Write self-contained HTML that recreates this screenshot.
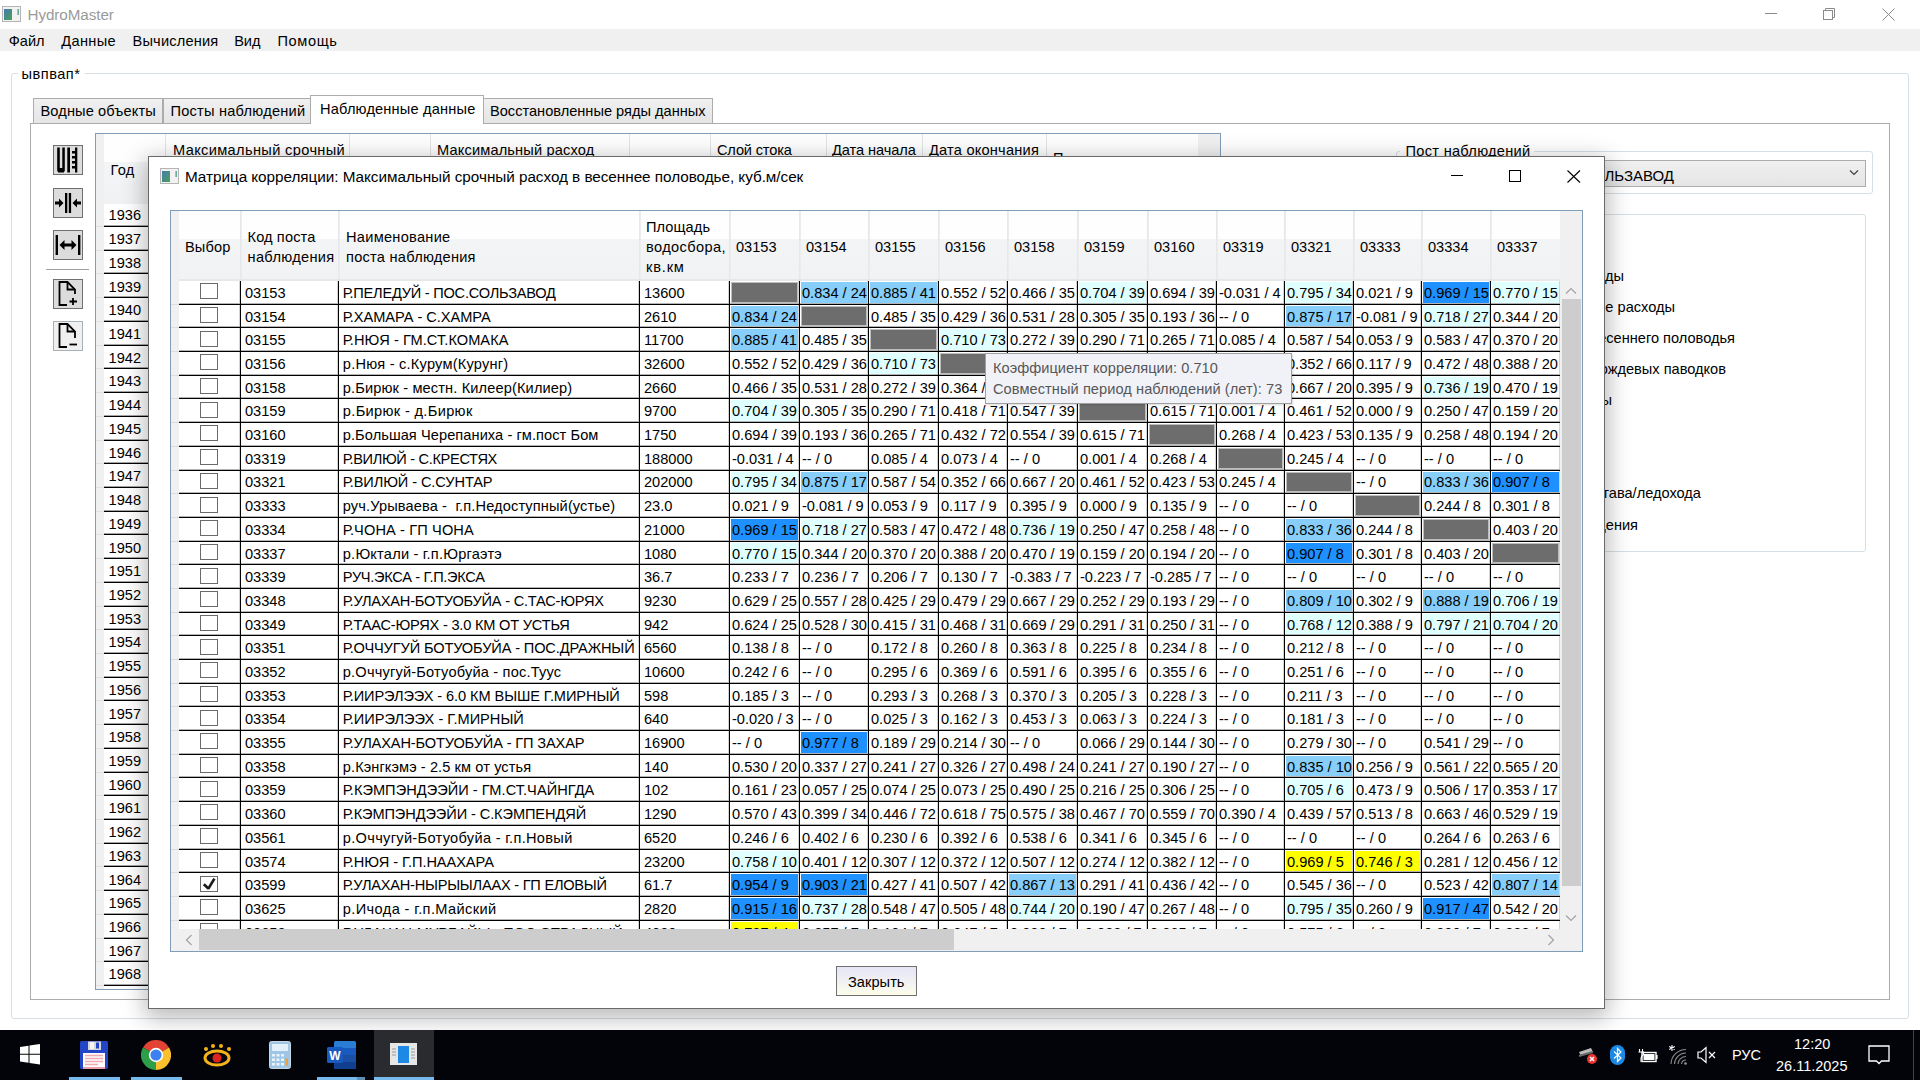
<!DOCTYPE html>
<html><head><meta charset="utf-8"><style>
html,body{margin:0;padding:0}
body{width:1920px;height:1080px;overflow:hidden;position:relative;background:#fff;font-family:"Liberation Sans",sans-serif}
.a{position:absolute}
.t{position:absolute;white-space:nowrap}
</style></head><body>
<svg class="a" style="left:2px;top:6px" width="19" height="16"><defs><linearGradient id="g2" x1="0" y1="0" x2="1" y2="1"><stop offset="0" stop-color="#4a78b0"/><stop offset="1" stop-color="#45a35a"/></linearGradient></defs><rect x="0.5" y="0.5" width="18" height="15" fill="#f2f2f2" stroke="#b4b4b4"/><rect x="2" y="3" width="8" height="11" fill="url(#g2)"/><rect x="15.5" y="3" width="1.3" height="6" fill="#4a9a8a"/></svg>
<div class="t " style="left:27.5px;top:5.23px;font-size:15.2px;line-height:19px;color:#9a9a9a;letter-spacing:-0.05px;">HydroMaster</div>
<div class="a" style="left:1765px;top:13px;width:12px;height:1px;background:#8a8a8a"></div>
<svg class="a" style="left:1822px;top:7px" width="16" height="16"><rect x="1.5" y="3.5" width="9" height="9" fill="none" stroke="#8a8a8a"/><path d="M3.5 3.5V1.5H12.5V10.5H10.5" fill="none" stroke="#8a8a8a"/></svg>
<svg class="a" style="left:1882px;top:8px" width="13" height="13"><path d="M0.5 0.5L12.5 12.5M12.5 0.5L0.5 12.5" stroke="#8a8a8a" stroke-width="1"/></svg>
<div class="a" style="left:0px;top:29px;width:1920px;height:22px;background:#f0f0f0"></div>
<div class="t " style="left:8.75px;top:31.94px;font-size:14.6px;line-height:18px;color:#000;letter-spacing:0.0px;">Файл</div>
<div class="t " style="left:61.25px;top:31.94px;font-size:14.6px;line-height:18px;color:#000;letter-spacing:0.35px;">Данные</div>
<div class="t " style="left:132.5px;top:31.94px;font-size:14.6px;line-height:18px;color:#000;letter-spacing:0.194px;">Вычисления</div>
<div class="t " style="left:234.25px;top:31.94px;font-size:14.6px;line-height:18px;color:#000;letter-spacing:-0.125px;">Вид</div>
<div class="t " style="left:277.5px;top:31.94px;font-size:14.6px;line-height:18px;color:#000;letter-spacing:0.6px;">Помощь</div>
<div class="a" style="left:11px;top:73px;width:1898px;height:946px;border:1px solid #d5dfe5;border-radius:3px;box-sizing:border-box"></div>
<div class="a" style="left:18px;top:64px;width:67px;height:16px;background:#fff"></div>
<div class="t " style="left:21.5px;top:64.94px;font-size:14.6px;line-height:18px;color:#000;letter-spacing:0.5px;">ывпвап*</div>
<div class="a" style="left:30px;top:123px;width:1860px;height:877px;border:1px solid #acacac;box-sizing:border-box;background:#fff"></div>
<div class="a" style="left:33px;top:98px;width:130px;height:25px;background:linear-gradient(#f0f0f0,#e5e5e5);border:1px solid #acacac;border-bottom:none;box-sizing:border-box"></div>
<div class="t " style="left:40.5px;top:101.74px;font-size:14.6px;line-height:18px;color:#000;letter-spacing:0.115px;">Водные объекты</div>
<div class="a" style="left:163px;top:98px;width:148px;height:25px;background:linear-gradient(#f0f0f0,#e5e5e5);border:1px solid #acacac;border-bottom:none;box-sizing:border-box"></div>
<div class="t " style="left:170.5px;top:101.74px;font-size:14.6px;line-height:18px;color:#000;letter-spacing:0.227px;">Посты наблюдений</div>
<div class="a" style="left:483px;top:98px;width:230px;height:25px;background:linear-gradient(#f0f0f0,#e5e5e5);border:1px solid #acacac;border-bottom:none;box-sizing:border-box"></div>
<div class="t " style="left:490px;top:101.74px;font-size:14.6px;line-height:18px;color:#000;letter-spacing:0.0px;">Восстановленные ряды данных</div>
<div class="a" style="left:310px;top:95px;width:174px;height:29px;background:#fff;border:1px solid #acacac;border-bottom:none;box-sizing:border-box"></div>
<div class="t " style="left:320px;top:100.44px;font-size:14.6px;line-height:18px;color:#000;letter-spacing:0.176px;">Наблюденные данные</div>
<div class="a" style="left:53px;top:145px;width:30px;height:30px;background:#dcdcdc;border:1px solid #707070;box-sizing:border-box"></div>
<svg class="a" style="left:53px;top:145px" width="30" height="30"><path d="M4.2 2.5H6.8V23H9.3V2.5H11.8V25.5L10.8 27.5H5.2L4.2 25.5Z" fill="#000"/><rect x="14.3" y="2.5" width="2.7" height="25" fill="#000"/><rect x="22" y="2.5" width="2.3" height="25" fill="#000"/><path d="M19 6H22V8.5H19ZM19 11H22V13.5H19ZM19 16H22V18.5H19ZM19 21H22V23.5H19Z" fill="#000"/></svg>
<div class="a" style="left:53px;top:188px;width:30px;height:30px;background:#dcdcdc;border:1px solid #707070;box-sizing:border-box"></div>
<svg class="a" style="left:53px;top:188px" width="30" height="30"><rect x="12" y="5" width="2.3" height="20" fill="#000"/><rect x="15.8" y="5" width="2.3" height="20" fill="#000"/><path d="M2 13.5H6V10.5L10.5 15L6 19.5V16.5H2Z" fill="#000"/><path d="M28 13.5H24V10.5L19.5 15L24 19.5V16.5H28Z" fill="#000"/></svg>
<div class="a" style="left:53px;top:230px;width:30px;height:30px;background:#dcdcdc;border:1px solid #707070;box-sizing:border-box"></div>
<svg class="a" style="left:53px;top:230px" width="30" height="30"><rect x="2.6" y="5" width="2.4" height="20" fill="#000"/><rect x="25" y="5" width="2.4" height="20" fill="#000"/><path d="M6.5 15L11.5 10V13.6H18.5V10L23.5 15L18.5 20V16.4H11.5V20Z" fill="#000"/></svg>
<div class="a" style="left:46px;top:269px;width:43px;height:1px;background:#a0a0a0"></div>
<div class="a" style="left:53px;top:279px;width:30px;height:30px;background:#dcdcdc;border:1px solid #707070;box-sizing:border-box"></div>
<svg class="a" style="left:53px;top:279px" width="30" height="30"><path d="M14 26H6.5V3H14.5L22 10.5V15" fill="none" stroke="#000" stroke-width="1.8"/><path d="M14.5 3V10.5H22" fill="none" stroke="#000" stroke-width="1.8"/><path d="M20 19V26M16.5 22.5H24" stroke="#000" stroke-width="1.8"/></svg>
<div class="a" style="left:53px;top:321px;width:30px;height:30px;background:#f0f0f0;border:1px solid #a9b1b8;box-sizing:border-box"></div>
<svg class="a" style="left:53px;top:321px" width="30" height="30"><path d="M14 26H6.5V3H14.5L22 10.5V17" fill="none" stroke="#000" stroke-width="1.8"/><path d="M14.5 3V10.5H22" fill="none" stroke="#000" stroke-width="1.8"/><path d="M16.5 23.5H24" stroke="#000" stroke-width="1.8"/></svg>
<div class="a" style="left:95px;top:133px;width:1126px;height:857px;border:1px solid #7f9db9;box-sizing:border-box;background:#fff"></div>
<div class="a" style="left:96px;top:134px;width:8px;height:855px;background:#f0f0f0"></div>
<div class="a" style="left:104px;top:134px;width:1094px;height:70px;background:linear-gradient(#fefefe 0,#fefefe 40%,#f4f5f7 40%,#f0f1f3 100%)"></div>
<div class="a" style="left:165px;top:134px;width:1px;height:70px;background:#e2e3e5"></div>
<div class="a" style="left:349px;top:134px;width:1px;height:70px;background:#e2e3e5"></div>
<div class="a" style="left:430px;top:134px;width:1px;height:70px;background:#e2e3e5"></div>
<div class="a" style="left:629px;top:134px;width:1px;height:70px;background:#e2e3e5"></div>
<div class="a" style="left:710px;top:134px;width:1px;height:70px;background:#e2e3e5"></div>
<div class="a" style="left:826px;top:134px;width:1px;height:70px;background:#e2e3e5"></div>
<div class="a" style="left:922px;top:134px;width:1px;height:70px;background:#e2e3e5"></div>
<div class="a" style="left:1046px;top:134px;width:1px;height:70px;background:#e2e3e5"></div>
<div class="a" style="left:1198px;top:134px;width:22px;height:855px;background:#f0f0f0"></div>
<div class="t " style="left:110.5px;top:160.94px;font-size:14.6px;line-height:18px;color:#000;letter-spacing:0.25px;">Год</div>
<div class="t " style="left:173px;top:140.94px;font-size:14.6px;line-height:18px;color:#000;letter-spacing:0.358px;">Максимальный срочный</div>
<div class="t " style="left:437px;top:140.94px;font-size:14.6px;line-height:18px;color:#000;letter-spacing:0.153px;">Максимальный расход</div>
<div class="t " style="left:717px;top:140.94px;font-size:14.6px;line-height:18px;color:#000;letter-spacing:-0.167px;">Слой стока</div>
<div class="t " style="left:832px;top:140.94px;font-size:14.6px;line-height:18px;color:#000;letter-spacing:-0.075px;">Дата начала</div>
<div class="t " style="left:929px;top:140.94px;font-size:14.6px;line-height:18px;color:#000;letter-spacing:0.212px;">Дата окончания</div>
<div class="t " style="left:1053px;top:148.94px;font-size:14.6px;line-height:18px;color:#000;">П</div>
<div class="a" style="left:96px;top:204px;width:60px;height:785px;overflow:hidden">
<div class="a" style="left:8px;top:21px;width:50px;height:1px;background:#a4a4a4"></div>
<div class="a" style="left:8px;top:22px;width:50px;height:1px;background:#000"></div>
<div class="a" style="left:0px;top:22px;width:8px;height:1px;background:#e0e0e0"></div>
<div class="t " style="left:12.599999999999994px;top:2.44px;font-size:14.6px;line-height:18px;color:#000;">1936</div>
<div class="a" style="left:8px;top:45px;width:50px;height:1px;background:#a4a4a4"></div>
<div class="a" style="left:8px;top:46px;width:50px;height:1px;background:#000"></div>
<div class="a" style="left:0px;top:46px;width:8px;height:1px;background:#e0e0e0"></div>
<div class="t " style="left:12.599999999999994px;top:26.16px;font-size:14.6px;line-height:18px;color:#000;">1937</div>
<div class="a" style="left:8px;top:68px;width:50px;height:1px;background:#a4a4a4"></div>
<div class="a" style="left:8px;top:69px;width:50px;height:1px;background:#000"></div>
<div class="a" style="left:0px;top:69px;width:8px;height:1px;background:#e0e0e0"></div>
<div class="t " style="left:12.599999999999994px;top:49.88px;font-size:14.6px;line-height:18px;color:#000;">1938</div>
<div class="a" style="left:8px;top:92px;width:50px;height:1px;background:#a4a4a4"></div>
<div class="a" style="left:8px;top:93px;width:50px;height:1px;background:#000"></div>
<div class="a" style="left:0px;top:93px;width:8px;height:1px;background:#e0e0e0"></div>
<div class="t " style="left:12.599999999999994px;top:73.60px;font-size:14.6px;line-height:18px;color:#000;">1939</div>
<div class="a" style="left:8px;top:116px;width:50px;height:1px;background:#a4a4a4"></div>
<div class="a" style="left:8px;top:117px;width:50px;height:1px;background:#000"></div>
<div class="a" style="left:0px;top:117px;width:8px;height:1px;background:#e0e0e0"></div>
<div class="t " style="left:12.599999999999994px;top:97.32px;font-size:14.6px;line-height:18px;color:#000;">1940</div>
<div class="a" style="left:8px;top:140px;width:50px;height:1px;background:#a4a4a4"></div>
<div class="a" style="left:8px;top:141px;width:50px;height:1px;background:#000"></div>
<div class="a" style="left:0px;top:141px;width:8px;height:1px;background:#e0e0e0"></div>
<div class="t " style="left:12.599999999999994px;top:121.04px;font-size:14.6px;line-height:18px;color:#000;">1941</div>
<div class="a" style="left:8px;top:163px;width:50px;height:1px;background:#a4a4a4"></div>
<div class="a" style="left:8px;top:164px;width:50px;height:1px;background:#000"></div>
<div class="a" style="left:0px;top:164px;width:8px;height:1px;background:#e0e0e0"></div>
<div class="t " style="left:12.599999999999994px;top:144.76px;font-size:14.6px;line-height:18px;color:#000;">1942</div>
<div class="a" style="left:8px;top:187px;width:50px;height:1px;background:#a4a4a4"></div>
<div class="a" style="left:8px;top:188px;width:50px;height:1px;background:#000"></div>
<div class="a" style="left:0px;top:188px;width:8px;height:1px;background:#e0e0e0"></div>
<div class="t " style="left:12.599999999999994px;top:168.48px;font-size:14.6px;line-height:18px;color:#000;">1943</div>
<div class="a" style="left:8px;top:211px;width:50px;height:1px;background:#a4a4a4"></div>
<div class="a" style="left:8px;top:212px;width:50px;height:1px;background:#000"></div>
<div class="a" style="left:0px;top:212px;width:8px;height:1px;background:#e0e0e0"></div>
<div class="t " style="left:12.599999999999994px;top:192.20px;font-size:14.6px;line-height:18px;color:#000;">1944</div>
<div class="a" style="left:8px;top:235px;width:50px;height:1px;background:#a4a4a4"></div>
<div class="a" style="left:8px;top:236px;width:50px;height:1px;background:#000"></div>
<div class="a" style="left:0px;top:236px;width:8px;height:1px;background:#e0e0e0"></div>
<div class="t " style="left:12.599999999999994px;top:215.92px;font-size:14.6px;line-height:18px;color:#000;">1945</div>
<div class="a" style="left:8px;top:258px;width:50px;height:1px;background:#a4a4a4"></div>
<div class="a" style="left:8px;top:259px;width:50px;height:1px;background:#000"></div>
<div class="a" style="left:0px;top:259px;width:8px;height:1px;background:#e0e0e0"></div>
<div class="t " style="left:12.599999999999994px;top:239.64px;font-size:14.6px;line-height:18px;color:#000;">1946</div>
<div class="a" style="left:8px;top:282px;width:50px;height:1px;background:#a4a4a4"></div>
<div class="a" style="left:8px;top:283px;width:50px;height:1px;background:#000"></div>
<div class="a" style="left:0px;top:283px;width:8px;height:1px;background:#e0e0e0"></div>
<div class="t " style="left:12.599999999999994px;top:263.36px;font-size:14.6px;line-height:18px;color:#000;">1947</div>
<div class="a" style="left:8px;top:306px;width:50px;height:1px;background:#a4a4a4"></div>
<div class="a" style="left:8px;top:307px;width:50px;height:1px;background:#000"></div>
<div class="a" style="left:0px;top:307px;width:8px;height:1px;background:#e0e0e0"></div>
<div class="t " style="left:12.599999999999994px;top:287.08px;font-size:14.6px;line-height:18px;color:#000;">1948</div>
<div class="a" style="left:8px;top:329px;width:50px;height:1px;background:#a4a4a4"></div>
<div class="a" style="left:8px;top:330px;width:50px;height:1px;background:#000"></div>
<div class="a" style="left:0px;top:330px;width:8px;height:1px;background:#e0e0e0"></div>
<div class="t " style="left:12.599999999999994px;top:310.80px;font-size:14.6px;line-height:18px;color:#000;">1949</div>
<div class="a" style="left:8px;top:353px;width:50px;height:1px;background:#a4a4a4"></div>
<div class="a" style="left:8px;top:354px;width:50px;height:1px;background:#000"></div>
<div class="a" style="left:0px;top:354px;width:8px;height:1px;background:#e0e0e0"></div>
<div class="t " style="left:12.599999999999994px;top:334.52px;font-size:14.6px;line-height:18px;color:#000;">1950</div>
<div class="a" style="left:8px;top:377px;width:50px;height:1px;background:#a4a4a4"></div>
<div class="a" style="left:8px;top:378px;width:50px;height:1px;background:#000"></div>
<div class="a" style="left:0px;top:378px;width:8px;height:1px;background:#e0e0e0"></div>
<div class="t " style="left:12.599999999999994px;top:358.24px;font-size:14.6px;line-height:18px;color:#000;">1951</div>
<div class="a" style="left:8px;top:401px;width:50px;height:1px;background:#a4a4a4"></div>
<div class="a" style="left:8px;top:402px;width:50px;height:1px;background:#000"></div>
<div class="a" style="left:0px;top:402px;width:8px;height:1px;background:#e0e0e0"></div>
<div class="t " style="left:12.599999999999994px;top:381.96px;font-size:14.6px;line-height:18px;color:#000;">1952</div>
<div class="a" style="left:8px;top:424px;width:50px;height:1px;background:#a4a4a4"></div>
<div class="a" style="left:8px;top:425px;width:50px;height:1px;background:#000"></div>
<div class="a" style="left:0px;top:425px;width:8px;height:1px;background:#e0e0e0"></div>
<div class="t " style="left:12.599999999999994px;top:405.68px;font-size:14.6px;line-height:18px;color:#000;">1953</div>
<div class="a" style="left:8px;top:448px;width:50px;height:1px;background:#a4a4a4"></div>
<div class="a" style="left:8px;top:449px;width:50px;height:1px;background:#000"></div>
<div class="a" style="left:0px;top:449px;width:8px;height:1px;background:#e0e0e0"></div>
<div class="t " style="left:12.599999999999994px;top:429.40px;font-size:14.6px;line-height:18px;color:#000;">1954</div>
<div class="a" style="left:8px;top:472px;width:50px;height:1px;background:#a4a4a4"></div>
<div class="a" style="left:8px;top:473px;width:50px;height:1px;background:#000"></div>
<div class="a" style="left:0px;top:473px;width:8px;height:1px;background:#e0e0e0"></div>
<div class="t " style="left:12.599999999999994px;top:453.12px;font-size:14.6px;line-height:18px;color:#000;">1955</div>
<div class="a" style="left:8px;top:495px;width:50px;height:1px;background:#a4a4a4"></div>
<div class="a" style="left:8px;top:496px;width:50px;height:1px;background:#000"></div>
<div class="a" style="left:0px;top:496px;width:8px;height:1px;background:#e0e0e0"></div>
<div class="t " style="left:12.599999999999994px;top:476.84px;font-size:14.6px;line-height:18px;color:#000;">1956</div>
<div class="a" style="left:8px;top:519px;width:50px;height:1px;background:#a4a4a4"></div>
<div class="a" style="left:8px;top:520px;width:50px;height:1px;background:#000"></div>
<div class="a" style="left:0px;top:520px;width:8px;height:1px;background:#e0e0e0"></div>
<div class="t " style="left:12.599999999999994px;top:500.56px;font-size:14.6px;line-height:18px;color:#000;">1957</div>
<div class="a" style="left:8px;top:543px;width:50px;height:1px;background:#a4a4a4"></div>
<div class="a" style="left:8px;top:544px;width:50px;height:1px;background:#000"></div>
<div class="a" style="left:0px;top:544px;width:8px;height:1px;background:#e0e0e0"></div>
<div class="t " style="left:12.599999999999994px;top:524.28px;font-size:14.6px;line-height:18px;color:#000;">1958</div>
<div class="a" style="left:8px;top:567px;width:50px;height:1px;background:#a4a4a4"></div>
<div class="a" style="left:8px;top:568px;width:50px;height:1px;background:#000"></div>
<div class="a" style="left:0px;top:568px;width:8px;height:1px;background:#e0e0e0"></div>
<div class="t " style="left:12.599999999999994px;top:548.00px;font-size:14.6px;line-height:18px;color:#000;">1959</div>
<div class="a" style="left:8px;top:590px;width:50px;height:1px;background:#a4a4a4"></div>
<div class="a" style="left:8px;top:591px;width:50px;height:1px;background:#000"></div>
<div class="a" style="left:0px;top:591px;width:8px;height:1px;background:#e0e0e0"></div>
<div class="t " style="left:12.599999999999994px;top:571.72px;font-size:14.6px;line-height:18px;color:#000;">1960</div>
<div class="a" style="left:8px;top:614px;width:50px;height:1px;background:#a4a4a4"></div>
<div class="a" style="left:8px;top:615px;width:50px;height:1px;background:#000"></div>
<div class="a" style="left:0px;top:615px;width:8px;height:1px;background:#e0e0e0"></div>
<div class="t " style="left:12.599999999999994px;top:595.44px;font-size:14.6px;line-height:18px;color:#000;">1961</div>
<div class="a" style="left:8px;top:638px;width:50px;height:1px;background:#a4a4a4"></div>
<div class="a" style="left:8px;top:639px;width:50px;height:1px;background:#000"></div>
<div class="a" style="left:0px;top:639px;width:8px;height:1px;background:#e0e0e0"></div>
<div class="t " style="left:12.599999999999994px;top:619.16px;font-size:14.6px;line-height:18px;color:#000;">1962</div>
<div class="a" style="left:8px;top:661px;width:50px;height:1px;background:#a4a4a4"></div>
<div class="a" style="left:8px;top:662px;width:50px;height:1px;background:#000"></div>
<div class="a" style="left:0px;top:662px;width:8px;height:1px;background:#e0e0e0"></div>
<div class="t " style="left:12.599999999999994px;top:642.88px;font-size:14.6px;line-height:18px;color:#000;">1963</div>
<div class="a" style="left:8px;top:685px;width:50px;height:1px;background:#a4a4a4"></div>
<div class="a" style="left:8px;top:686px;width:50px;height:1px;background:#000"></div>
<div class="a" style="left:0px;top:686px;width:8px;height:1px;background:#e0e0e0"></div>
<div class="t " style="left:12.599999999999994px;top:666.60px;font-size:14.6px;line-height:18px;color:#000;">1964</div>
<div class="a" style="left:8px;top:709px;width:50px;height:1px;background:#a4a4a4"></div>
<div class="a" style="left:8px;top:710px;width:50px;height:1px;background:#000"></div>
<div class="a" style="left:0px;top:710px;width:8px;height:1px;background:#e0e0e0"></div>
<div class="t " style="left:12.599999999999994px;top:690.32px;font-size:14.6px;line-height:18px;color:#000;">1965</div>
<div class="a" style="left:8px;top:733px;width:50px;height:1px;background:#a4a4a4"></div>
<div class="a" style="left:8px;top:734px;width:50px;height:1px;background:#000"></div>
<div class="a" style="left:0px;top:734px;width:8px;height:1px;background:#e0e0e0"></div>
<div class="t " style="left:12.599999999999994px;top:714.04px;font-size:14.6px;line-height:18px;color:#000;">1966</div>
<div class="a" style="left:8px;top:756px;width:50px;height:1px;background:#a4a4a4"></div>
<div class="a" style="left:8px;top:757px;width:50px;height:1px;background:#000"></div>
<div class="a" style="left:0px;top:757px;width:8px;height:1px;background:#e0e0e0"></div>
<div class="t " style="left:12.599999999999994px;top:737.76px;font-size:14.6px;line-height:18px;color:#000;">1967</div>
<div class="a" style="left:8px;top:780px;width:50px;height:1px;background:#a4a4a4"></div>
<div class="a" style="left:8px;top:781px;width:50px;height:1px;background:#000"></div>
<div class="a" style="left:0px;top:781px;width:8px;height:1px;background:#e0e0e0"></div>
<div class="t " style="left:12.599999999999994px;top:761.48px;font-size:14.6px;line-height:18px;color:#000;">1968</div>
<div class="a" style="left:8px;top:804px;width:50px;height:1px;background:#a4a4a4"></div>
<div class="a" style="left:8px;top:805px;width:50px;height:1px;background:#000"></div>
<div class="a" style="left:0px;top:805px;width:8px;height:1px;background:#e0e0e0"></div>
<div class="t " style="left:12.599999999999994px;top:785.20px;font-size:14.6px;line-height:18px;color:#000;">1969</div>
</div>
<div class="a" style="left:1396px;top:151px;width:477px;height:43px;border:1px solid #d5dfe5;border-radius:3px;box-sizing:border-box"></div>
<div class="a" style="left:1400px;top:140px;width:134px;height:16px;background:#fff"></div>
<div class="t " style="left:1405.6px;top:141.94px;font-size:14.6px;line-height:18px;color:#000;letter-spacing:0.279px;">Пост наблюдений</div>
<div class="a" style="left:1560px;top:160px;width:306px;height:27px;background:linear-gradient(#f0f0f0,#e5e5e5);border:1px solid #acacac;box-sizing:border-box"></div>
<div class="t" style="right:246px;top:165.60px;font-size:15px;line-height:19px;color:#000;">Р.ПЕЛЕДУЙ - ПОС.СОЛЬЗАВОД</div>
<svg class="a" style="left:1849px;top:169px" width="10" height="8"><path d="M1 1.5L5 5.5L9 1.5" fill="none" stroke="#404040" stroke-width="1.2"/></svg>
<div class="a" style="left:1396px;top:214px;width:470px;height:338px;border:1px solid #d5dfe5;border-radius:3px;box-sizing:border-box"></div>
<div class="t" style="right:296px;top:266.94px;font-size:14.6px;line-height:18px;color:#000;">Расходы</div>
<div class="t" style="right:245px;top:297.64px;font-size:14.6px;line-height:18px;color:#000;">Среднесуточные расходы</div>
<div class="t" style="right:185px;top:328.64px;font-size:14.6px;line-height:18px;color:#000;">Слой стока весеннего половодья</div>
<div class="t" style="right:194px;top:360.24px;font-size:14.6px;line-height:18px;color:#000;">Слой стока дождевых паводков</div>
<div class="t" style="right:308px;top:390.94px;font-size:14.6px;line-height:18px;color:#000;">Уровни воды</div>
<div class="t" style="right:219px;top:483.64px;font-size:14.6px;line-height:18px;color:#000;">Даты ледостава/ледохода</div>
<div class="t" style="right:282px;top:515.94px;font-size:14.6px;line-height:18px;color:#000;">Даты наблюдения</div>
<div class="a" style="left:148px;top:156px;width:1457px;height:853px;background:#fff;border:1px solid #6a6a6a;box-sizing:border-box;box-shadow:0 6px 22px 3px rgba(0,0,0,0.28)"></div>
<svg class="a" style="left:160px;top:168px" width="19" height="16"><defs><linearGradient id="g160" x1="0" y1="0" x2="1" y2="1"><stop offset="0" stop-color="#4a78b0"/><stop offset="1" stop-color="#45a35a"/></linearGradient></defs><rect x="0.5" y="0.5" width="18" height="15" fill="#f2f2f2" stroke="#b4b4b4"/><rect x="2" y="3" width="8" height="11" fill="url(#g160)"/><rect x="15.5" y="3" width="1.3" height="6" fill="#4a9a8a"/></svg>
<div class="t " style="left:185px;top:167.20px;font-size:15.3px;line-height:19px;color:#000;letter-spacing:-0.045px;">Матрица корреляции: Максимальный срочный расход в весеннее половодье, куб.м/сек</div>
<div class="a" style="left:1451px;top:175px;width:12px;height:1px;background:#000"></div>
<svg class="a" style="left:1508px;top:169px" width="14" height="14"><rect x="1.5" y="1.5" width="11" height="11" fill="none" stroke="#000"/></svg>
<svg class="a" style="left:1567px;top:170px" width="14" height="13"><path d="M0.5 0.5L13 12.5M13 0.5L0.5 12.5" stroke="#000" stroke-width="1.1"/></svg>
<div class="a" style="left:170px;top:210px;width:1413px;height:742px;border:1px solid #7f9db9;box-sizing:border-box;background:#fff"></div>
<div class="a" style="left:171px;top:211px;width:8px;height:718px;background:#f0f0f0"></div>
<div class="a" style="left:179px;top:211px;width:1381px;height:70px;background:linear-gradient(#fefefe 0,#fefefe 40%,#f3f4f6 40%,#f1f2f4 100%)"></div>
<div class="a" style="left:240px;top:211px;width:2px;height:70px;background:linear-gradient(90deg,#e4e5e7,#eeeff1)"></div>
<div class="a" style="left:338px;top:211px;width:2px;height:70px;background:linear-gradient(90deg,#e4e5e7,#eeeff1)"></div>
<div class="a" style="left:639px;top:211px;width:2px;height:70px;background:linear-gradient(90deg,#e4e5e7,#eeeff1)"></div>
<div class="a" style="left:729px;top:211px;width:2px;height:70px;background:linear-gradient(90deg,#e4e5e7,#eeeff1)"></div>
<div class="a" style="left:799px;top:211px;width:2px;height:70px;background:linear-gradient(90deg,#e4e5e7,#eeeff1)"></div>
<div class="a" style="left:868px;top:211px;width:2px;height:70px;background:linear-gradient(90deg,#e4e5e7,#eeeff1)"></div>
<div class="a" style="left:938px;top:211px;width:2px;height:70px;background:linear-gradient(90deg,#e4e5e7,#eeeff1)"></div>
<div class="a" style="left:1007px;top:211px;width:2px;height:70px;background:linear-gradient(90deg,#e4e5e7,#eeeff1)"></div>
<div class="a" style="left:1077px;top:211px;width:2px;height:70px;background:linear-gradient(90deg,#e4e5e7,#eeeff1)"></div>
<div class="a" style="left:1147px;top:211px;width:2px;height:70px;background:linear-gradient(90deg,#e4e5e7,#eeeff1)"></div>
<div class="a" style="left:1216px;top:211px;width:2px;height:70px;background:linear-gradient(90deg,#e4e5e7,#eeeff1)"></div>
<div class="a" style="left:1284px;top:211px;width:2px;height:70px;background:linear-gradient(90deg,#e4e5e7,#eeeff1)"></div>
<div class="a" style="left:1353px;top:211px;width:2px;height:70px;background:linear-gradient(90deg,#e4e5e7,#eeeff1)"></div>
<div class="a" style="left:1421px;top:211px;width:2px;height:70px;background:linear-gradient(90deg,#e4e5e7,#eeeff1)"></div>
<div class="a" style="left:1490px;top:211px;width:2px;height:70px;background:linear-gradient(90deg,#e4e5e7,#eeeff1)"></div>
<div class="a" style="left:1560px;top:211px;width:2px;height:70px;background:linear-gradient(90deg,#e4e5e7,#eeeff1)"></div>
<div class="a" style="left:179px;top:279px;width:1381px;height:2px;background:#e6e7e9"></div>
<div class="t " style="left:185px;top:238.44px;font-size:14.6px;line-height:18px;color:#000;letter-spacing:0.125px;">Выбор</div>
<div class="t " style="left:247.5px;top:228.44px;font-size:14.6px;line-height:18px;color:#000;letter-spacing:0.125px;">Код поста</div>
<div class="t " style="left:247.5px;top:247.94px;font-size:14.6px;line-height:18px;color:#000;letter-spacing:0.333px;">наблюдения</div>
<div class="t " style="left:346px;top:228.44px;font-size:14.6px;line-height:18px;color:#000;letter-spacing:0.273px;">Наименование</div>
<div class="t " style="left:346px;top:247.94px;font-size:14.6px;line-height:18px;color:#000;letter-spacing:0.25px;">поста наблюдения</div>
<div class="t " style="left:646px;top:218.44px;font-size:14.6px;line-height:18px;color:#000;letter-spacing:0.083px;">Площадь</div>
<div class="t " style="left:646px;top:238.44px;font-size:14.6px;line-height:18px;color:#000;letter-spacing:0.389px;">водосбора,</div>
<div class="t " style="left:646px;top:258.44px;font-size:14.6px;line-height:18px;color:#000;letter-spacing:0.812px;">кв.км</div>
<div class="t " style="left:736px;top:238.44px;font-size:14.6px;line-height:18px;color:#000;">03153</div>
<div class="t " style="left:806px;top:238.44px;font-size:14.6px;line-height:18px;color:#000;">03154</div>
<div class="t " style="left:875px;top:238.44px;font-size:14.6px;line-height:18px;color:#000;">03155</div>
<div class="t " style="left:945px;top:238.44px;font-size:14.6px;line-height:18px;color:#000;">03156</div>
<div class="t " style="left:1014px;top:238.44px;font-size:14.6px;line-height:18px;color:#000;">03158</div>
<div class="t " style="left:1084px;top:238.44px;font-size:14.6px;line-height:18px;color:#000;">03159</div>
<div class="t " style="left:1154px;top:238.44px;font-size:14.6px;line-height:18px;color:#000;">03160</div>
<div class="t " style="left:1223px;top:238.44px;font-size:14.6px;line-height:18px;color:#000;">03319</div>
<div class="t " style="left:1291px;top:238.44px;font-size:14.6px;line-height:18px;color:#000;">03321</div>
<div class="t " style="left:1360px;top:238.44px;font-size:14.6px;line-height:18px;color:#000;">03333</div>
<div class="t " style="left:1428px;top:238.44px;font-size:14.6px;line-height:18px;color:#000;">03334</div>
<div class="t " style="left:1497px;top:238.44px;font-size:14.6px;line-height:18px;color:#000;">03337</div>
<div class="a" style="left:171px;top:281px;width:1389px;height:648px;overflow:hidden">
<div class="a" style="left:29px;top:2px;width:18px;height:16px;border:1px solid #6a6a6a;box-sizing:border-box;background:#fff"></div>
<div class="t " style="left:74px;top:2.94px;font-size:14.6px;line-height:18px;color:#000;">03153</div>
<div class="t " style="left:171.8px;top:2.94px;font-size:14.6px;line-height:18px;color:#000;letter-spacing:-0.241px">Р.ПЕЛЕДУЙ - ПОС.СОЛЬЗАВОД</div>
<div class="t " style="left:473px;top:2.94px;font-size:14.6px;line-height:18px;color:#000;">13600</div>
<div class="a" style="left:560px;top:1px;width:67px;height:21px;background:#6d6d6d;box-shadow:0 0 0 1px #bdbdbd inset"></div>
<div class="a" style="left:630px;top:1px;width:66px;height:21px;background:#87cefa"></div>
<div class="a" style="left:629px;top:0px;width:68px;height:24px;overflow:hidden"><div class="t " style="left:2px;top:2.94px;font-size:14.6px;line-height:18px;color:#000;">0.834 / 24</div></div>
<div class="a" style="left:699px;top:1px;width:67px;height:21px;background:#87cefa"></div>
<div class="a" style="left:698px;top:0px;width:69px;height:24px;overflow:hidden"><div class="t " style="left:2px;top:2.94px;font-size:14.6px;line-height:18px;color:#000;">0.885 / 41</div></div>
<div class="a" style="left:768px;top:0px;width:68px;height:24px;overflow:hidden"><div class="t " style="left:2px;top:2.94px;font-size:14.6px;line-height:18px;color:#000;">0.552 / 52</div></div>
<div class="a" style="left:837px;top:0px;width:69px;height:24px;overflow:hidden"><div class="t " style="left:2px;top:2.94px;font-size:14.6px;line-height:18px;color:#000;">0.466 / 35</div></div>
<div class="a" style="left:908px;top:1px;width:67px;height:21px;background:#e0ffff"></div>
<div class="a" style="left:907px;top:0px;width:69px;height:24px;overflow:hidden"><div class="t " style="left:2px;top:2.94px;font-size:14.6px;line-height:18px;color:#000;">0.704 / 39</div></div>
<div class="a" style="left:977px;top:0px;width:68px;height:24px;overflow:hidden"><div class="t " style="left:2px;top:2.94px;font-size:14.6px;line-height:18px;color:#000;">0.694 / 39</div></div>
<div class="a" style="left:1046px;top:0px;width:67px;height:24px;overflow:hidden"><div class="t " style="left:2px;top:2.94px;font-size:14.6px;line-height:18px;color:#000;">-0.031 / 4</div></div>
<div class="a" style="left:1115px;top:1px;width:66px;height:21px;background:#e0ffff"></div>
<div class="a" style="left:1114px;top:0px;width:68px;height:24px;overflow:hidden"><div class="t " style="left:2px;top:2.94px;font-size:14.6px;line-height:18px;color:#000;">0.795 / 34</div></div>
<div class="a" style="left:1183px;top:0px;width:67px;height:24px;overflow:hidden"><div class="t " style="left:2px;top:2.94px;font-size:14.6px;line-height:18px;color:#000;">0.021 / 9</div></div>
<div class="a" style="left:1252px;top:1px;width:66px;height:21px;background:#1e90ff"></div>
<div class="a" style="left:1251px;top:0px;width:68px;height:24px;overflow:hidden"><div class="t " style="left:2px;top:2.94px;font-size:14.6px;line-height:18px;color:#000;">0.969 / 15</div></div>
<div class="a" style="left:1321px;top:1px;width:67px;height:21px;background:#e0ffff"></div>
<div class="a" style="left:1320px;top:0px;width:69px;height:24px;overflow:hidden"><div class="t " style="left:2px;top:2.94px;font-size:14.6px;line-height:18px;color:#000;">0.770 / 15</div></div>
<div class="a" style="left:29px;top:26px;width:18px;height:16px;border:1px solid #6a6a6a;box-sizing:border-box;background:#fff"></div>
<div class="t " style="left:74px;top:26.63px;font-size:14.6px;line-height:18px;color:#000;">03154</div>
<div class="t " style="left:171.8px;top:26.63px;font-size:14.6px;line-height:18px;color:#000;letter-spacing:-0.035px">Р.ХАМАРА - С.ХАМРА</div>
<div class="t " style="left:473px;top:26.63px;font-size:14.6px;line-height:18px;color:#000;">2610</div>
<div class="a" style="left:560px;top:25px;width:67px;height:20px;background:#87cefa"></div>
<div class="a" style="left:559px;top:24px;width:69px;height:23px;overflow:hidden"><div class="t " style="left:2px;top:2.63px;font-size:14.6px;line-height:18px;color:#000;">0.834 / 24</div></div>
<div class="a" style="left:630px;top:25px;width:66px;height:20px;background:#6d6d6d;box-shadow:0 0 0 1px #bdbdbd inset"></div>
<div class="a" style="left:698px;top:24px;width:69px;height:23px;overflow:hidden"><div class="t " style="left:2px;top:2.63px;font-size:14.6px;line-height:18px;color:#000;">0.485 / 35</div></div>
<div class="a" style="left:768px;top:24px;width:68px;height:23px;overflow:hidden"><div class="t " style="left:2px;top:2.63px;font-size:14.6px;line-height:18px;color:#000;">0.429 / 36</div></div>
<div class="a" style="left:837px;top:24px;width:69px;height:23px;overflow:hidden"><div class="t " style="left:2px;top:2.63px;font-size:14.6px;line-height:18px;color:#000;">0.531 / 28</div></div>
<div class="a" style="left:907px;top:24px;width:69px;height:23px;overflow:hidden"><div class="t " style="left:2px;top:2.63px;font-size:14.6px;line-height:18px;color:#000;">0.305 / 35</div></div>
<div class="a" style="left:977px;top:24px;width:68px;height:23px;overflow:hidden"><div class="t " style="left:2px;top:2.63px;font-size:14.6px;line-height:18px;color:#000;">0.193 / 36</div></div>
<div class="a" style="left:1046px;top:24px;width:67px;height:23px;overflow:hidden"><div class="t " style="left:2px;top:2.63px;font-size:14.6px;line-height:18px;color:#000;">-- / 0</div></div>
<div class="a" style="left:1115px;top:25px;width:66px;height:20px;background:#87cefa"></div>
<div class="a" style="left:1114px;top:24px;width:68px;height:23px;overflow:hidden"><div class="t " style="left:2px;top:2.63px;font-size:14.6px;line-height:18px;color:#000;">0.875 / 17</div></div>
<div class="a" style="left:1183px;top:24px;width:67px;height:23px;overflow:hidden"><div class="t " style="left:2px;top:2.63px;font-size:14.6px;line-height:18px;color:#000;">-0.081 / 9</div></div>
<div class="a" style="left:1252px;top:25px;width:66px;height:20px;background:#e0ffff"></div>
<div class="a" style="left:1251px;top:24px;width:68px;height:23px;overflow:hidden"><div class="t " style="left:2px;top:2.63px;font-size:14.6px;line-height:18px;color:#000;">0.718 / 27</div></div>
<div class="a" style="left:1320px;top:24px;width:69px;height:23px;overflow:hidden"><div class="t " style="left:2px;top:2.63px;font-size:14.6px;line-height:18px;color:#000;">0.344 / 20</div></div>
<div class="a" style="left:29px;top:50px;width:18px;height:16px;border:1px solid #6a6a6a;box-sizing:border-box;background:#fff"></div>
<div class="t " style="left:74px;top:50.32px;font-size:14.6px;line-height:18px;color:#000;">03155</div>
<div class="t " style="left:171.8px;top:50.32px;font-size:14.6px;line-height:18px;color:#000;letter-spacing:0.042px">Р.НЮЯ - ГМ.СТ.КОМАКА</div>
<div class="t " style="left:473px;top:50.32px;font-size:14.6px;line-height:18px;color:#000;">11700</div>
<div class="a" style="left:560px;top:48px;width:67px;height:21px;background:#87cefa"></div>
<div class="a" style="left:559px;top:47px;width:69px;height:24px;overflow:hidden"><div class="t " style="left:2px;top:3.32px;font-size:14.6px;line-height:18px;color:#000;">0.885 / 41</div></div>
<div class="a" style="left:629px;top:47px;width:68px;height:24px;overflow:hidden"><div class="t " style="left:2px;top:3.32px;font-size:14.6px;line-height:18px;color:#000;">0.485 / 35</div></div>
<div class="a" style="left:699px;top:48px;width:67px;height:21px;background:#6d6d6d;box-shadow:0 0 0 1px #bdbdbd inset"></div>
<div class="a" style="left:769px;top:48px;width:66px;height:21px;background:#e0ffff"></div>
<div class="a" style="left:768px;top:47px;width:68px;height:24px;overflow:hidden"><div class="t " style="left:2px;top:3.32px;font-size:14.6px;line-height:18px;color:#000;">0.710 / 73</div></div>
<div class="a" style="left:837px;top:47px;width:69px;height:24px;overflow:hidden"><div class="t " style="left:2px;top:3.32px;font-size:14.6px;line-height:18px;color:#000;">0.272 / 39</div></div>
<div class="a" style="left:907px;top:47px;width:69px;height:24px;overflow:hidden"><div class="t " style="left:2px;top:3.32px;font-size:14.6px;line-height:18px;color:#000;">0.290 / 71</div></div>
<div class="a" style="left:977px;top:47px;width:68px;height:24px;overflow:hidden"><div class="t " style="left:2px;top:3.32px;font-size:14.6px;line-height:18px;color:#000;">0.265 / 71</div></div>
<div class="a" style="left:1046px;top:47px;width:67px;height:24px;overflow:hidden"><div class="t " style="left:2px;top:3.32px;font-size:14.6px;line-height:18px;color:#000;">0.085 / 4</div></div>
<div class="a" style="left:1114px;top:47px;width:68px;height:24px;overflow:hidden"><div class="t " style="left:2px;top:3.32px;font-size:14.6px;line-height:18px;color:#000;">0.587 / 54</div></div>
<div class="a" style="left:1183px;top:47px;width:67px;height:24px;overflow:hidden"><div class="t " style="left:2px;top:3.32px;font-size:14.6px;line-height:18px;color:#000;">0.053 / 9</div></div>
<div class="a" style="left:1251px;top:47px;width:68px;height:24px;overflow:hidden"><div class="t " style="left:2px;top:3.32px;font-size:14.6px;line-height:18px;color:#000;">0.583 / 47</div></div>
<div class="a" style="left:1320px;top:47px;width:69px;height:24px;overflow:hidden"><div class="t " style="left:2px;top:3.32px;font-size:14.6px;line-height:18px;color:#000;">0.370 / 20</div></div>
<div class="a" style="left:29px;top:73px;width:18px;height:16px;border:1px solid #6a6a6a;box-sizing:border-box;background:#fff"></div>
<div class="t " style="left:74px;top:74.01px;font-size:14.6px;line-height:18px;color:#000;">03156</div>
<div class="t " style="left:171.8px;top:74.01px;font-size:14.6px;line-height:18px;color:#000;letter-spacing:0.218px">р.Нюя - с.Курум(Курунг)</div>
<div class="t " style="left:473px;top:74.01px;font-size:14.6px;line-height:18px;color:#000;">32600</div>
<div class="a" style="left:559px;top:71px;width:69px;height:24px;overflow:hidden"><div class="t " style="left:2px;top:3.01px;font-size:14.6px;line-height:18px;color:#000;">0.552 / 52</div></div>
<div class="a" style="left:629px;top:71px;width:68px;height:24px;overflow:hidden"><div class="t " style="left:2px;top:3.01px;font-size:14.6px;line-height:18px;color:#000;">0.429 / 36</div></div>
<div class="a" style="left:699px;top:72px;width:67px;height:21px;background:#e0ffff"></div>
<div class="a" style="left:698px;top:71px;width:69px;height:24px;overflow:hidden"><div class="t " style="left:2px;top:3.01px;font-size:14.6px;line-height:18px;color:#000;">0.710 / 73</div></div>
<div class="a" style="left:769px;top:72px;width:66px;height:21px;background:#6d6d6d;box-shadow:0 0 0 1px #bdbdbd inset"></div>
<div class="a" style="left:837px;top:71px;width:69px;height:24px;overflow:hidden"><div class="t " style="left:2px;top:3.01px;font-size:14.6px;line-height:18px;color:#000;">0.364 / 39</div></div>
<div class="a" style="left:907px;top:71px;width:69px;height:24px;overflow:hidden"><div class="t " style="left:2px;top:3.01px;font-size:14.6px;line-height:18px;color:#000;">0.418 / 71</div></div>
<div class="a" style="left:977px;top:71px;width:68px;height:24px;overflow:hidden"><div class="t " style="left:2px;top:3.01px;font-size:14.6px;line-height:18px;color:#000;">0.432 / 72</div></div>
<div class="a" style="left:1046px;top:71px;width:67px;height:24px;overflow:hidden"><div class="t " style="left:2px;top:3.01px;font-size:14.6px;line-height:18px;color:#000;">0.073 / 4</div></div>
<div class="a" style="left:1114px;top:71px;width:68px;height:24px;overflow:hidden"><div class="t " style="left:2px;top:3.01px;font-size:14.6px;line-height:18px;color:#000;">0.352 / 66</div></div>
<div class="a" style="left:1183px;top:71px;width:67px;height:24px;overflow:hidden"><div class="t " style="left:2px;top:3.01px;font-size:14.6px;line-height:18px;color:#000;">0.117 / 9</div></div>
<div class="a" style="left:1251px;top:71px;width:68px;height:24px;overflow:hidden"><div class="t " style="left:2px;top:3.01px;font-size:14.6px;line-height:18px;color:#000;">0.472 / 48</div></div>
<div class="a" style="left:1320px;top:71px;width:69px;height:24px;overflow:hidden"><div class="t " style="left:2px;top:3.01px;font-size:14.6px;line-height:18px;color:#000;">0.388 / 20</div></div>
<div class="a" style="left:29px;top:97px;width:18px;height:16px;border:1px solid #6a6a6a;box-sizing:border-box;background:#fff"></div>
<div class="t " style="left:74px;top:97.70px;font-size:14.6px;line-height:18px;color:#000;">03158</div>
<div class="t " style="left:171.8px;top:97.70px;font-size:14.6px;line-height:18px;color:#000;letter-spacing:0.133px">р.Бирюк - местн. Килеер(Килиер)</div>
<div class="t " style="left:473px;top:97.70px;font-size:14.6px;line-height:18px;color:#000;">2660</div>
<div class="a" style="left:559px;top:95px;width:69px;height:23px;overflow:hidden"><div class="t " style="left:2px;top:2.70px;font-size:14.6px;line-height:18px;color:#000;">0.466 / 35</div></div>
<div class="a" style="left:629px;top:95px;width:68px;height:23px;overflow:hidden"><div class="t " style="left:2px;top:2.70px;font-size:14.6px;line-height:18px;color:#000;">0.531 / 28</div></div>
<div class="a" style="left:698px;top:95px;width:69px;height:23px;overflow:hidden"><div class="t " style="left:2px;top:2.70px;font-size:14.6px;line-height:18px;color:#000;">0.272 / 39</div></div>
<div class="a" style="left:768px;top:95px;width:68px;height:23px;overflow:hidden"><div class="t " style="left:2px;top:2.70px;font-size:14.6px;line-height:18px;color:#000;">0.364 / 39</div></div>
<div class="a" style="left:838px;top:96px;width:67px;height:20px;background:#6d6d6d;box-shadow:0 0 0 1px #bdbdbd inset"></div>
<div class="a" style="left:907px;top:95px;width:69px;height:23px;overflow:hidden"><div class="t " style="left:2px;top:2.70px;font-size:14.6px;line-height:18px;color:#000;">0.547 / 39</div></div>
<div class="a" style="left:977px;top:95px;width:68px;height:23px;overflow:hidden"><div class="t " style="left:2px;top:2.70px;font-size:14.6px;line-height:18px;color:#000;">0.554 / 39</div></div>
<div class="a" style="left:1046px;top:95px;width:67px;height:23px;overflow:hidden"><div class="t " style="left:2px;top:2.70px;font-size:14.6px;line-height:18px;color:#000;">-- / 0</div></div>
<div class="a" style="left:1114px;top:95px;width:68px;height:23px;overflow:hidden"><div class="t " style="left:2px;top:2.70px;font-size:14.6px;line-height:18px;color:#000;">0.667 / 20</div></div>
<div class="a" style="left:1183px;top:95px;width:67px;height:23px;overflow:hidden"><div class="t " style="left:2px;top:2.70px;font-size:14.6px;line-height:18px;color:#000;">0.395 / 9</div></div>
<div class="a" style="left:1252px;top:96px;width:66px;height:20px;background:#e0ffff"></div>
<div class="a" style="left:1251px;top:95px;width:68px;height:23px;overflow:hidden"><div class="t " style="left:2px;top:2.70px;font-size:14.6px;line-height:18px;color:#000;">0.736 / 19</div></div>
<div class="a" style="left:1320px;top:95px;width:69px;height:23px;overflow:hidden"><div class="t " style="left:2px;top:2.70px;font-size:14.6px;line-height:18px;color:#000;">0.470 / 19</div></div>
<div class="a" style="left:29px;top:121px;width:18px;height:16px;border:1px solid #6a6a6a;box-sizing:border-box;background:#fff"></div>
<div class="t " style="left:74px;top:121.39px;font-size:14.6px;line-height:18px;color:#000;">03159</div>
<div class="t " style="left:171.8px;top:121.39px;font-size:14.6px;line-height:18px;color:#000;letter-spacing:0.338px">р.Бирюк - д.Бирюк</div>
<div class="t " style="left:473px;top:121.39px;font-size:14.6px;line-height:18px;color:#000;">9700</div>
<div class="a" style="left:560px;top:119px;width:67px;height:21px;background:#e0ffff"></div>
<div class="a" style="left:559px;top:118px;width:69px;height:24px;overflow:hidden"><div class="t " style="left:2px;top:3.39px;font-size:14.6px;line-height:18px;color:#000;">0.704 / 39</div></div>
<div class="a" style="left:629px;top:118px;width:68px;height:24px;overflow:hidden"><div class="t " style="left:2px;top:3.39px;font-size:14.6px;line-height:18px;color:#000;">0.305 / 35</div></div>
<div class="a" style="left:698px;top:118px;width:69px;height:24px;overflow:hidden"><div class="t " style="left:2px;top:3.39px;font-size:14.6px;line-height:18px;color:#000;">0.290 / 71</div></div>
<div class="a" style="left:768px;top:118px;width:68px;height:24px;overflow:hidden"><div class="t " style="left:2px;top:3.39px;font-size:14.6px;line-height:18px;color:#000;">0.418 / 71</div></div>
<div class="a" style="left:837px;top:118px;width:69px;height:24px;overflow:hidden"><div class="t " style="left:2px;top:3.39px;font-size:14.6px;line-height:18px;color:#000;">0.547 / 39</div></div>
<div class="a" style="left:908px;top:119px;width:67px;height:21px;background:#6d6d6d;box-shadow:0 0 0 1px #bdbdbd inset"></div>
<div class="a" style="left:977px;top:118px;width:68px;height:24px;overflow:hidden"><div class="t " style="left:2px;top:3.39px;font-size:14.6px;line-height:18px;color:#000;">0.615 / 71</div></div>
<div class="a" style="left:1046px;top:118px;width:67px;height:24px;overflow:hidden"><div class="t " style="left:2px;top:3.39px;font-size:14.6px;line-height:18px;color:#000;">0.001 / 4</div></div>
<div class="a" style="left:1114px;top:118px;width:68px;height:24px;overflow:hidden"><div class="t " style="left:2px;top:3.39px;font-size:14.6px;line-height:18px;color:#000;">0.461 / 52</div></div>
<div class="a" style="left:1183px;top:118px;width:67px;height:24px;overflow:hidden"><div class="t " style="left:2px;top:3.39px;font-size:14.6px;line-height:18px;color:#000;">0.000 / 9</div></div>
<div class="a" style="left:1251px;top:118px;width:68px;height:24px;overflow:hidden"><div class="t " style="left:2px;top:3.39px;font-size:14.6px;line-height:18px;color:#000;">0.250 / 47</div></div>
<div class="a" style="left:1320px;top:118px;width:69px;height:24px;overflow:hidden"><div class="t " style="left:2px;top:3.39px;font-size:14.6px;line-height:18px;color:#000;">0.159 / 20</div></div>
<div class="a" style="left:29px;top:144px;width:18px;height:16px;border:1px solid #6a6a6a;box-sizing:border-box;background:#fff"></div>
<div class="t " style="left:74px;top:145.08px;font-size:14.6px;line-height:18px;color:#000;">03160</div>
<div class="t " style="left:171.8px;top:145.08px;font-size:14.6px;line-height:18px;color:#000;letter-spacing:0.073px">р.Большая Черепаниха - гм.пост Бом</div>
<div class="t " style="left:473px;top:145.08px;font-size:14.6px;line-height:18px;color:#000;">1750</div>
<div class="a" style="left:559px;top:142px;width:69px;height:24px;overflow:hidden"><div class="t " style="left:2px;top:3.08px;font-size:14.6px;line-height:18px;color:#000;">0.694 / 39</div></div>
<div class="a" style="left:629px;top:142px;width:68px;height:24px;overflow:hidden"><div class="t " style="left:2px;top:3.08px;font-size:14.6px;line-height:18px;color:#000;">0.193 / 36</div></div>
<div class="a" style="left:698px;top:142px;width:69px;height:24px;overflow:hidden"><div class="t " style="left:2px;top:3.08px;font-size:14.6px;line-height:18px;color:#000;">0.265 / 71</div></div>
<div class="a" style="left:768px;top:142px;width:68px;height:24px;overflow:hidden"><div class="t " style="left:2px;top:3.08px;font-size:14.6px;line-height:18px;color:#000;">0.432 / 72</div></div>
<div class="a" style="left:837px;top:142px;width:69px;height:24px;overflow:hidden"><div class="t " style="left:2px;top:3.08px;font-size:14.6px;line-height:18px;color:#000;">0.554 / 39</div></div>
<div class="a" style="left:907px;top:142px;width:69px;height:24px;overflow:hidden"><div class="t " style="left:2px;top:3.08px;font-size:14.6px;line-height:18px;color:#000;">0.615 / 71</div></div>
<div class="a" style="left:978px;top:143px;width:66px;height:21px;background:#6d6d6d;box-shadow:0 0 0 1px #bdbdbd inset"></div>
<div class="a" style="left:1046px;top:142px;width:67px;height:24px;overflow:hidden"><div class="t " style="left:2px;top:3.08px;font-size:14.6px;line-height:18px;color:#000;">0.268 / 4</div></div>
<div class="a" style="left:1114px;top:142px;width:68px;height:24px;overflow:hidden"><div class="t " style="left:2px;top:3.08px;font-size:14.6px;line-height:18px;color:#000;">0.423 / 53</div></div>
<div class="a" style="left:1183px;top:142px;width:67px;height:24px;overflow:hidden"><div class="t " style="left:2px;top:3.08px;font-size:14.6px;line-height:18px;color:#000;">0.135 / 9</div></div>
<div class="a" style="left:1251px;top:142px;width:68px;height:24px;overflow:hidden"><div class="t " style="left:2px;top:3.08px;font-size:14.6px;line-height:18px;color:#000;">0.258 / 48</div></div>
<div class="a" style="left:1320px;top:142px;width:69px;height:24px;overflow:hidden"><div class="t " style="left:2px;top:3.08px;font-size:14.6px;line-height:18px;color:#000;">0.194 / 20</div></div>
<div class="a" style="left:29px;top:168px;width:18px;height:16px;border:1px solid #6a6a6a;box-sizing:border-box;background:#fff"></div>
<div class="t " style="left:74px;top:168.77px;font-size:14.6px;line-height:18px;color:#000;">03319</div>
<div class="t " style="left:171.8px;top:168.77px;font-size:14.6px;line-height:18px;color:#000;letter-spacing:-0.333px">Р.ВИЛЮЙ - С.КРЕСТЯХ</div>
<div class="t " style="left:473px;top:168.77px;font-size:14.6px;line-height:18px;color:#000;">188000</div>
<div class="a" style="left:559px;top:166px;width:69px;height:24px;overflow:hidden"><div class="t " style="left:2px;top:2.77px;font-size:14.6px;line-height:18px;color:#000;">-0.031 / 4</div></div>
<div class="a" style="left:629px;top:166px;width:68px;height:24px;overflow:hidden"><div class="t " style="left:2px;top:2.77px;font-size:14.6px;line-height:18px;color:#000;">-- / 0</div></div>
<div class="a" style="left:698px;top:166px;width:69px;height:24px;overflow:hidden"><div class="t " style="left:2px;top:2.77px;font-size:14.6px;line-height:18px;color:#000;">0.085 / 4</div></div>
<div class="a" style="left:768px;top:166px;width:68px;height:24px;overflow:hidden"><div class="t " style="left:2px;top:2.77px;font-size:14.6px;line-height:18px;color:#000;">0.073 / 4</div></div>
<div class="a" style="left:837px;top:166px;width:69px;height:24px;overflow:hidden"><div class="t " style="left:2px;top:2.77px;font-size:14.6px;line-height:18px;color:#000;">-- / 0</div></div>
<div class="a" style="left:907px;top:166px;width:69px;height:24px;overflow:hidden"><div class="t " style="left:2px;top:2.77px;font-size:14.6px;line-height:18px;color:#000;">0.001 / 4</div></div>
<div class="a" style="left:977px;top:166px;width:68px;height:24px;overflow:hidden"><div class="t " style="left:2px;top:2.77px;font-size:14.6px;line-height:18px;color:#000;">0.268 / 4</div></div>
<div class="a" style="left:1047px;top:167px;width:65px;height:21px;background:#6d6d6d;box-shadow:0 0 0 1px #bdbdbd inset"></div>
<div class="a" style="left:1114px;top:166px;width:68px;height:24px;overflow:hidden"><div class="t " style="left:2px;top:2.77px;font-size:14.6px;line-height:18px;color:#000;">0.245 / 4</div></div>
<div class="a" style="left:1183px;top:166px;width:67px;height:24px;overflow:hidden"><div class="t " style="left:2px;top:2.77px;font-size:14.6px;line-height:18px;color:#000;">-- / 0</div></div>
<div class="a" style="left:1251px;top:166px;width:68px;height:24px;overflow:hidden"><div class="t " style="left:2px;top:2.77px;font-size:14.6px;line-height:18px;color:#000;">-- / 0</div></div>
<div class="a" style="left:1320px;top:166px;width:69px;height:24px;overflow:hidden"><div class="t " style="left:2px;top:2.77px;font-size:14.6px;line-height:18px;color:#000;">-- / 0</div></div>
<div class="a" style="left:29px;top:192px;width:18px;height:16px;border:1px solid #6a6a6a;box-sizing:border-box;background:#fff"></div>
<div class="t " style="left:74px;top:192.46px;font-size:14.6px;line-height:18px;color:#000;">03321</div>
<div class="t " style="left:171.8px;top:192.46px;font-size:14.6px;line-height:18px;color:#000;letter-spacing:-0.094px">Р.ВИЛЮЙ - С.СУНТАР</div>
<div class="t " style="left:473px;top:192.46px;font-size:14.6px;line-height:18px;color:#000;">202000</div>
<div class="a" style="left:560px;top:191px;width:67px;height:20px;background:#e0ffff"></div>
<div class="a" style="left:559px;top:190px;width:69px;height:23px;overflow:hidden"><div class="t " style="left:2px;top:2.46px;font-size:14.6px;line-height:18px;color:#000;">0.795 / 34</div></div>
<div class="a" style="left:630px;top:191px;width:66px;height:20px;background:#87cefa"></div>
<div class="a" style="left:629px;top:190px;width:68px;height:23px;overflow:hidden"><div class="t " style="left:2px;top:2.46px;font-size:14.6px;line-height:18px;color:#000;">0.875 / 17</div></div>
<div class="a" style="left:698px;top:190px;width:69px;height:23px;overflow:hidden"><div class="t " style="left:2px;top:2.46px;font-size:14.6px;line-height:18px;color:#000;">0.587 / 54</div></div>
<div class="a" style="left:768px;top:190px;width:68px;height:23px;overflow:hidden"><div class="t " style="left:2px;top:2.46px;font-size:14.6px;line-height:18px;color:#000;">0.352 / 66</div></div>
<div class="a" style="left:837px;top:190px;width:69px;height:23px;overflow:hidden"><div class="t " style="left:2px;top:2.46px;font-size:14.6px;line-height:18px;color:#000;">0.667 / 20</div></div>
<div class="a" style="left:907px;top:190px;width:69px;height:23px;overflow:hidden"><div class="t " style="left:2px;top:2.46px;font-size:14.6px;line-height:18px;color:#000;">0.461 / 52</div></div>
<div class="a" style="left:977px;top:190px;width:68px;height:23px;overflow:hidden"><div class="t " style="left:2px;top:2.46px;font-size:14.6px;line-height:18px;color:#000;">0.423 / 53</div></div>
<div class="a" style="left:1046px;top:190px;width:67px;height:23px;overflow:hidden"><div class="t " style="left:2px;top:2.46px;font-size:14.6px;line-height:18px;color:#000;">0.245 / 4</div></div>
<div class="a" style="left:1115px;top:191px;width:66px;height:20px;background:#6d6d6d;box-shadow:0 0 0 1px #bdbdbd inset"></div>
<div class="a" style="left:1183px;top:190px;width:67px;height:23px;overflow:hidden"><div class="t " style="left:2px;top:2.46px;font-size:14.6px;line-height:18px;color:#000;">-- / 0</div></div>
<div class="a" style="left:1252px;top:191px;width:66px;height:20px;background:#87cefa"></div>
<div class="a" style="left:1251px;top:190px;width:68px;height:23px;overflow:hidden"><div class="t " style="left:2px;top:2.46px;font-size:14.6px;line-height:18px;color:#000;">0.833 / 36</div></div>
<div class="a" style="left:1321px;top:191px;width:67px;height:20px;background:#1e90ff"></div>
<div class="a" style="left:1320px;top:190px;width:69px;height:23px;overflow:hidden"><div class="t " style="left:2px;top:2.46px;font-size:14.6px;line-height:18px;color:#000;">0.907 / 8</div></div>
<div class="a" style="left:29px;top:216px;width:18px;height:16px;border:1px solid #6a6a6a;box-sizing:border-box;background:#fff"></div>
<div class="t " style="left:74px;top:216.15px;font-size:14.6px;line-height:18px;color:#000;">03333</div>
<div class="t " style="left:171.8px;top:216.15px;font-size:14.6px;line-height:18px;color:#000;letter-spacing:0.124px">руч.Урываева -&nbsp; г.п.Недоступный(устье)</div>
<div class="t " style="left:473px;top:216.15px;font-size:14.6px;line-height:18px;color:#000;">23.0</div>
<div class="a" style="left:559px;top:213px;width:69px;height:24px;overflow:hidden"><div class="t " style="left:2px;top:3.15px;font-size:14.6px;line-height:18px;color:#000;">0.021 / 9</div></div>
<div class="a" style="left:629px;top:213px;width:68px;height:24px;overflow:hidden"><div class="t " style="left:2px;top:3.15px;font-size:14.6px;line-height:18px;color:#000;">-0.081 / 9</div></div>
<div class="a" style="left:698px;top:213px;width:69px;height:24px;overflow:hidden"><div class="t " style="left:2px;top:3.15px;font-size:14.6px;line-height:18px;color:#000;">0.053 / 9</div></div>
<div class="a" style="left:768px;top:213px;width:68px;height:24px;overflow:hidden"><div class="t " style="left:2px;top:3.15px;font-size:14.6px;line-height:18px;color:#000;">0.117 / 9</div></div>
<div class="a" style="left:837px;top:213px;width:69px;height:24px;overflow:hidden"><div class="t " style="left:2px;top:3.15px;font-size:14.6px;line-height:18px;color:#000;">0.395 / 9</div></div>
<div class="a" style="left:907px;top:213px;width:69px;height:24px;overflow:hidden"><div class="t " style="left:2px;top:3.15px;font-size:14.6px;line-height:18px;color:#000;">0.000 / 9</div></div>
<div class="a" style="left:977px;top:213px;width:68px;height:24px;overflow:hidden"><div class="t " style="left:2px;top:3.15px;font-size:14.6px;line-height:18px;color:#000;">0.135 / 9</div></div>
<div class="a" style="left:1046px;top:213px;width:67px;height:24px;overflow:hidden"><div class="t " style="left:2px;top:3.15px;font-size:14.6px;line-height:18px;color:#000;">-- / 0</div></div>
<div class="a" style="left:1114px;top:213px;width:68px;height:24px;overflow:hidden"><div class="t " style="left:2px;top:3.15px;font-size:14.6px;line-height:18px;color:#000;">-- / 0</div></div>
<div class="a" style="left:1184px;top:214px;width:65px;height:21px;background:#6d6d6d;box-shadow:0 0 0 1px #bdbdbd inset"></div>
<div class="a" style="left:1251px;top:213px;width:68px;height:24px;overflow:hidden"><div class="t " style="left:2px;top:3.15px;font-size:14.6px;line-height:18px;color:#000;">0.244 / 8</div></div>
<div class="a" style="left:1320px;top:213px;width:69px;height:24px;overflow:hidden"><div class="t " style="left:2px;top:3.15px;font-size:14.6px;line-height:18px;color:#000;">0.301 / 8</div></div>
<div class="a" style="left:29px;top:239px;width:18px;height:16px;border:1px solid #6a6a6a;box-sizing:border-box;background:#fff"></div>
<div class="t " style="left:74px;top:239.84px;font-size:14.6px;line-height:18px;color:#000;">03334</div>
<div class="t " style="left:171.8px;top:239.84px;font-size:14.6px;line-height:18px;color:#000;letter-spacing:0.12px">Р.ЧОНА - ГП ЧОНА</div>
<div class="t " style="left:473px;top:239.84px;font-size:14.6px;line-height:18px;color:#000;">21000</div>
<div class="a" style="left:560px;top:238px;width:67px;height:21px;background:#1e90ff"></div>
<div class="a" style="left:559px;top:237px;width:69px;height:24px;overflow:hidden"><div class="t " style="left:2px;top:2.84px;font-size:14.6px;line-height:18px;color:#000;">0.969 / 15</div></div>
<div class="a" style="left:630px;top:238px;width:66px;height:21px;background:#e0ffff"></div>
<div class="a" style="left:629px;top:237px;width:68px;height:24px;overflow:hidden"><div class="t " style="left:2px;top:2.84px;font-size:14.6px;line-height:18px;color:#000;">0.718 / 27</div></div>
<div class="a" style="left:698px;top:237px;width:69px;height:24px;overflow:hidden"><div class="t " style="left:2px;top:2.84px;font-size:14.6px;line-height:18px;color:#000;">0.583 / 47</div></div>
<div class="a" style="left:768px;top:237px;width:68px;height:24px;overflow:hidden"><div class="t " style="left:2px;top:2.84px;font-size:14.6px;line-height:18px;color:#000;">0.472 / 48</div></div>
<div class="a" style="left:838px;top:238px;width:67px;height:21px;background:#e0ffff"></div>
<div class="a" style="left:837px;top:237px;width:69px;height:24px;overflow:hidden"><div class="t " style="left:2px;top:2.84px;font-size:14.6px;line-height:18px;color:#000;">0.736 / 19</div></div>
<div class="a" style="left:907px;top:237px;width:69px;height:24px;overflow:hidden"><div class="t " style="left:2px;top:2.84px;font-size:14.6px;line-height:18px;color:#000;">0.250 / 47</div></div>
<div class="a" style="left:977px;top:237px;width:68px;height:24px;overflow:hidden"><div class="t " style="left:2px;top:2.84px;font-size:14.6px;line-height:18px;color:#000;">0.258 / 48</div></div>
<div class="a" style="left:1046px;top:237px;width:67px;height:24px;overflow:hidden"><div class="t " style="left:2px;top:2.84px;font-size:14.6px;line-height:18px;color:#000;">-- / 0</div></div>
<div class="a" style="left:1115px;top:238px;width:66px;height:21px;background:#87cefa"></div>
<div class="a" style="left:1114px;top:237px;width:68px;height:24px;overflow:hidden"><div class="t " style="left:2px;top:2.84px;font-size:14.6px;line-height:18px;color:#000;">0.833 / 36</div></div>
<div class="a" style="left:1183px;top:237px;width:67px;height:24px;overflow:hidden"><div class="t " style="left:2px;top:2.84px;font-size:14.6px;line-height:18px;color:#000;">0.244 / 8</div></div>
<div class="a" style="left:1252px;top:238px;width:66px;height:21px;background:#6d6d6d;box-shadow:0 0 0 1px #bdbdbd inset"></div>
<div class="a" style="left:1320px;top:237px;width:69px;height:24px;overflow:hidden"><div class="t " style="left:2px;top:2.84px;font-size:14.6px;line-height:18px;color:#000;">0.403 / 20</div></div>
<div class="a" style="left:29px;top:263px;width:18px;height:16px;border:1px solid #6a6a6a;box-sizing:border-box;background:#fff"></div>
<div class="t " style="left:74px;top:263.53px;font-size:14.6px;line-height:18px;color:#000;">03337</div>
<div class="t " style="left:171.8px;top:263.53px;font-size:14.6px;line-height:18px;color:#000;letter-spacing:0.21px">р.Юктали - г.п.Юргаэтэ</div>
<div class="t " style="left:473px;top:263.53px;font-size:14.6px;line-height:18px;color:#000;">1080</div>
<div class="a" style="left:560px;top:262px;width:67px;height:20px;background:#e0ffff"></div>
<div class="a" style="left:559px;top:261px;width:69px;height:23px;overflow:hidden"><div class="t " style="left:2px;top:2.53px;font-size:14.6px;line-height:18px;color:#000;">0.770 / 15</div></div>
<div class="a" style="left:629px;top:261px;width:68px;height:23px;overflow:hidden"><div class="t " style="left:2px;top:2.53px;font-size:14.6px;line-height:18px;color:#000;">0.344 / 20</div></div>
<div class="a" style="left:698px;top:261px;width:69px;height:23px;overflow:hidden"><div class="t " style="left:2px;top:2.53px;font-size:14.6px;line-height:18px;color:#000;">0.370 / 20</div></div>
<div class="a" style="left:768px;top:261px;width:68px;height:23px;overflow:hidden"><div class="t " style="left:2px;top:2.53px;font-size:14.6px;line-height:18px;color:#000;">0.388 / 20</div></div>
<div class="a" style="left:837px;top:261px;width:69px;height:23px;overflow:hidden"><div class="t " style="left:2px;top:2.53px;font-size:14.6px;line-height:18px;color:#000;">0.470 / 19</div></div>
<div class="a" style="left:907px;top:261px;width:69px;height:23px;overflow:hidden"><div class="t " style="left:2px;top:2.53px;font-size:14.6px;line-height:18px;color:#000;">0.159 / 20</div></div>
<div class="a" style="left:977px;top:261px;width:68px;height:23px;overflow:hidden"><div class="t " style="left:2px;top:2.53px;font-size:14.6px;line-height:18px;color:#000;">0.194 / 20</div></div>
<div class="a" style="left:1046px;top:261px;width:67px;height:23px;overflow:hidden"><div class="t " style="left:2px;top:2.53px;font-size:14.6px;line-height:18px;color:#000;">-- / 0</div></div>
<div class="a" style="left:1115px;top:262px;width:66px;height:20px;background:#1e90ff"></div>
<div class="a" style="left:1114px;top:261px;width:68px;height:23px;overflow:hidden"><div class="t " style="left:2px;top:2.53px;font-size:14.6px;line-height:18px;color:#000;">0.907 / 8</div></div>
<div class="a" style="left:1183px;top:261px;width:67px;height:23px;overflow:hidden"><div class="t " style="left:2px;top:2.53px;font-size:14.6px;line-height:18px;color:#000;">0.301 / 8</div></div>
<div class="a" style="left:1251px;top:261px;width:68px;height:23px;overflow:hidden"><div class="t " style="left:2px;top:2.53px;font-size:14.6px;line-height:18px;color:#000;">0.403 / 20</div></div>
<div class="a" style="left:1321px;top:262px;width:67px;height:20px;background:#6d6d6d;box-shadow:0 0 0 1px #bdbdbd inset"></div>
<div class="a" style="left:29px;top:287px;width:18px;height:16px;border:1px solid #6a6a6a;box-sizing:border-box;background:#fff"></div>
<div class="t " style="left:74px;top:287.22px;font-size:14.6px;line-height:18px;color:#000;">03339</div>
<div class="t " style="left:171.8px;top:287.22px;font-size:14.6px;line-height:18px;color:#000;letter-spacing:-0.311px">РУЧ.ЭКСА - Г.П.ЭКСА</div>
<div class="t " style="left:473px;top:287.22px;font-size:14.6px;line-height:18px;color:#000;">36.7</div>
<div class="a" style="left:559px;top:284px;width:69px;height:24px;overflow:hidden"><div class="t " style="left:2px;top:3.22px;font-size:14.6px;line-height:18px;color:#000;">0.233 / 7</div></div>
<div class="a" style="left:629px;top:284px;width:68px;height:24px;overflow:hidden"><div class="t " style="left:2px;top:3.22px;font-size:14.6px;line-height:18px;color:#000;">0.236 / 7</div></div>
<div class="a" style="left:698px;top:284px;width:69px;height:24px;overflow:hidden"><div class="t " style="left:2px;top:3.22px;font-size:14.6px;line-height:18px;color:#000;">0.206 / 7</div></div>
<div class="a" style="left:768px;top:284px;width:68px;height:24px;overflow:hidden"><div class="t " style="left:2px;top:3.22px;font-size:14.6px;line-height:18px;color:#000;">0.130 / 7</div></div>
<div class="a" style="left:837px;top:284px;width:69px;height:24px;overflow:hidden"><div class="t " style="left:2px;top:3.22px;font-size:14.6px;line-height:18px;color:#000;">-0.383 / 7</div></div>
<div class="a" style="left:907px;top:284px;width:69px;height:24px;overflow:hidden"><div class="t " style="left:2px;top:3.22px;font-size:14.6px;line-height:18px;color:#000;">-0.223 / 7</div></div>
<div class="a" style="left:977px;top:284px;width:68px;height:24px;overflow:hidden"><div class="t " style="left:2px;top:3.22px;font-size:14.6px;line-height:18px;color:#000;">-0.285 / 7</div></div>
<div class="a" style="left:1046px;top:284px;width:67px;height:24px;overflow:hidden"><div class="t " style="left:2px;top:3.22px;font-size:14.6px;line-height:18px;color:#000;">-- / 0</div></div>
<div class="a" style="left:1114px;top:284px;width:68px;height:24px;overflow:hidden"><div class="t " style="left:2px;top:3.22px;font-size:14.6px;line-height:18px;color:#000;">-- / 0</div></div>
<div class="a" style="left:1183px;top:284px;width:67px;height:24px;overflow:hidden"><div class="t " style="left:2px;top:3.22px;font-size:14.6px;line-height:18px;color:#000;">-- / 0</div></div>
<div class="a" style="left:1251px;top:284px;width:68px;height:24px;overflow:hidden"><div class="t " style="left:2px;top:3.22px;font-size:14.6px;line-height:18px;color:#000;">-- / 0</div></div>
<div class="a" style="left:1320px;top:284px;width:69px;height:24px;overflow:hidden"><div class="t " style="left:2px;top:3.22px;font-size:14.6px;line-height:18px;color:#000;">-- / 0</div></div>
<div class="a" style="left:29px;top:310px;width:18px;height:16px;border:1px solid #6a6a6a;box-sizing:border-box;background:#fff"></div>
<div class="t " style="left:74px;top:310.91px;font-size:14.6px;line-height:18px;color:#000;">03348</div>
<div class="t " style="left:171.8px;top:310.91px;font-size:14.6px;line-height:18px;color:#000;letter-spacing:-0.22px">Р.УЛАХАН-БОТУОБУЙА - С.ТАС-ЮРЯХ</div>
<div class="t " style="left:473px;top:310.91px;font-size:14.6px;line-height:18px;color:#000;">9230</div>
<div class="a" style="left:559px;top:308px;width:69px;height:24px;overflow:hidden"><div class="t " style="left:2px;top:2.91px;font-size:14.6px;line-height:18px;color:#000;">0.629 / 25</div></div>
<div class="a" style="left:629px;top:308px;width:68px;height:24px;overflow:hidden"><div class="t " style="left:2px;top:2.91px;font-size:14.6px;line-height:18px;color:#000;">0.557 / 28</div></div>
<div class="a" style="left:698px;top:308px;width:69px;height:24px;overflow:hidden"><div class="t " style="left:2px;top:2.91px;font-size:14.6px;line-height:18px;color:#000;">0.425 / 29</div></div>
<div class="a" style="left:768px;top:308px;width:68px;height:24px;overflow:hidden"><div class="t " style="left:2px;top:2.91px;font-size:14.6px;line-height:18px;color:#000;">0.479 / 29</div></div>
<div class="a" style="left:837px;top:308px;width:69px;height:24px;overflow:hidden"><div class="t " style="left:2px;top:2.91px;font-size:14.6px;line-height:18px;color:#000;">0.667 / 29</div></div>
<div class="a" style="left:907px;top:308px;width:69px;height:24px;overflow:hidden"><div class="t " style="left:2px;top:2.91px;font-size:14.6px;line-height:18px;color:#000;">0.252 / 29</div></div>
<div class="a" style="left:977px;top:308px;width:68px;height:24px;overflow:hidden"><div class="t " style="left:2px;top:2.91px;font-size:14.6px;line-height:18px;color:#000;">0.193 / 29</div></div>
<div class="a" style="left:1046px;top:308px;width:67px;height:24px;overflow:hidden"><div class="t " style="left:2px;top:2.91px;font-size:14.6px;line-height:18px;color:#000;">-- / 0</div></div>
<div class="a" style="left:1115px;top:309px;width:66px;height:21px;background:#87cefa"></div>
<div class="a" style="left:1114px;top:308px;width:68px;height:24px;overflow:hidden"><div class="t " style="left:2px;top:2.91px;font-size:14.6px;line-height:18px;color:#000;">0.809 / 10</div></div>
<div class="a" style="left:1183px;top:308px;width:67px;height:24px;overflow:hidden"><div class="t " style="left:2px;top:2.91px;font-size:14.6px;line-height:18px;color:#000;">0.302 / 9</div></div>
<div class="a" style="left:1252px;top:309px;width:66px;height:21px;background:#87cefa"></div>
<div class="a" style="left:1251px;top:308px;width:68px;height:24px;overflow:hidden"><div class="t " style="left:2px;top:2.91px;font-size:14.6px;line-height:18px;color:#000;">0.888 / 19</div></div>
<div class="a" style="left:1321px;top:309px;width:67px;height:21px;background:#e0ffff"></div>
<div class="a" style="left:1320px;top:308px;width:69px;height:24px;overflow:hidden"><div class="t " style="left:2px;top:2.91px;font-size:14.6px;line-height:18px;color:#000;">0.706 / 19</div></div>
<div class="a" style="left:29px;top:334px;width:18px;height:16px;border:1px solid #6a6a6a;box-sizing:border-box;background:#fff"></div>
<div class="t " style="left:74px;top:334.60px;font-size:14.6px;line-height:18px;color:#000;">03349</div>
<div class="t " style="left:171.8px;top:334.60px;font-size:14.6px;line-height:18px;color:#000;letter-spacing:-0.2px">Р.ТААС-ЮРЯХ - 3.0 КМ ОТ УСТЬЯ</div>
<div class="t " style="left:473px;top:334.60px;font-size:14.6px;line-height:18px;color:#000;">942</div>
<div class="a" style="left:559px;top:332px;width:69px;height:23px;overflow:hidden"><div class="t " style="left:2px;top:2.60px;font-size:14.6px;line-height:18px;color:#000;">0.624 / 25</div></div>
<div class="a" style="left:629px;top:332px;width:68px;height:23px;overflow:hidden"><div class="t " style="left:2px;top:2.60px;font-size:14.6px;line-height:18px;color:#000;">0.528 / 30</div></div>
<div class="a" style="left:698px;top:332px;width:69px;height:23px;overflow:hidden"><div class="t " style="left:2px;top:2.60px;font-size:14.6px;line-height:18px;color:#000;">0.415 / 31</div></div>
<div class="a" style="left:768px;top:332px;width:68px;height:23px;overflow:hidden"><div class="t " style="left:2px;top:2.60px;font-size:14.6px;line-height:18px;color:#000;">0.468 / 31</div></div>
<div class="a" style="left:837px;top:332px;width:69px;height:23px;overflow:hidden"><div class="t " style="left:2px;top:2.60px;font-size:14.6px;line-height:18px;color:#000;">0.669 / 29</div></div>
<div class="a" style="left:907px;top:332px;width:69px;height:23px;overflow:hidden"><div class="t " style="left:2px;top:2.60px;font-size:14.6px;line-height:18px;color:#000;">0.291 / 31</div></div>
<div class="a" style="left:977px;top:332px;width:68px;height:23px;overflow:hidden"><div class="t " style="left:2px;top:2.60px;font-size:14.6px;line-height:18px;color:#000;">0.250 / 31</div></div>
<div class="a" style="left:1046px;top:332px;width:67px;height:23px;overflow:hidden"><div class="t " style="left:2px;top:2.60px;font-size:14.6px;line-height:18px;color:#000;">-- / 0</div></div>
<div class="a" style="left:1115px;top:333px;width:66px;height:20px;background:#e0ffff"></div>
<div class="a" style="left:1114px;top:332px;width:68px;height:23px;overflow:hidden"><div class="t " style="left:2px;top:2.60px;font-size:14.6px;line-height:18px;color:#000;">0.768 / 12</div></div>
<div class="a" style="left:1183px;top:332px;width:67px;height:23px;overflow:hidden"><div class="t " style="left:2px;top:2.60px;font-size:14.6px;line-height:18px;color:#000;">0.388 / 9</div></div>
<div class="a" style="left:1252px;top:333px;width:66px;height:20px;background:#e0ffff"></div>
<div class="a" style="left:1251px;top:332px;width:68px;height:23px;overflow:hidden"><div class="t " style="left:2px;top:2.60px;font-size:14.6px;line-height:18px;color:#000;">0.797 / 21</div></div>
<div class="a" style="left:1321px;top:333px;width:67px;height:20px;background:#e0ffff"></div>
<div class="a" style="left:1320px;top:332px;width:69px;height:23px;overflow:hidden"><div class="t " style="left:2px;top:2.60px;font-size:14.6px;line-height:18px;color:#000;">0.704 / 20</div></div>
<div class="a" style="left:29px;top:358px;width:18px;height:16px;border:1px solid #6a6a6a;box-sizing:border-box;background:#fff"></div>
<div class="t " style="left:74px;top:358.29px;font-size:14.6px;line-height:18px;color:#000;">03351</div>
<div class="t " style="left:171.8px;top:358.29px;font-size:14.6px;line-height:18px;color:#000;letter-spacing:-0.138px">Р.ОЧЧУГУЙ БОТУОБУЙА - ПОС.ДРАЖНЫЙ</div>
<div class="t " style="left:473px;top:358.29px;font-size:14.6px;line-height:18px;color:#000;">6560</div>
<div class="a" style="left:559px;top:355px;width:69px;height:24px;overflow:hidden"><div class="t " style="left:2px;top:3.29px;font-size:14.6px;line-height:18px;color:#000;">0.138 / 8</div></div>
<div class="a" style="left:629px;top:355px;width:68px;height:24px;overflow:hidden"><div class="t " style="left:2px;top:3.29px;font-size:14.6px;line-height:18px;color:#000;">-- / 0</div></div>
<div class="a" style="left:698px;top:355px;width:69px;height:24px;overflow:hidden"><div class="t " style="left:2px;top:3.29px;font-size:14.6px;line-height:18px;color:#000;">0.172 / 8</div></div>
<div class="a" style="left:768px;top:355px;width:68px;height:24px;overflow:hidden"><div class="t " style="left:2px;top:3.29px;font-size:14.6px;line-height:18px;color:#000;">0.260 / 8</div></div>
<div class="a" style="left:837px;top:355px;width:69px;height:24px;overflow:hidden"><div class="t " style="left:2px;top:3.29px;font-size:14.6px;line-height:18px;color:#000;">0.363 / 8</div></div>
<div class="a" style="left:907px;top:355px;width:69px;height:24px;overflow:hidden"><div class="t " style="left:2px;top:3.29px;font-size:14.6px;line-height:18px;color:#000;">0.225 / 8</div></div>
<div class="a" style="left:977px;top:355px;width:68px;height:24px;overflow:hidden"><div class="t " style="left:2px;top:3.29px;font-size:14.6px;line-height:18px;color:#000;">0.234 / 8</div></div>
<div class="a" style="left:1046px;top:355px;width:67px;height:24px;overflow:hidden"><div class="t " style="left:2px;top:3.29px;font-size:14.6px;line-height:18px;color:#000;">-- / 0</div></div>
<div class="a" style="left:1114px;top:355px;width:68px;height:24px;overflow:hidden"><div class="t " style="left:2px;top:3.29px;font-size:14.6px;line-height:18px;color:#000;">0.212 / 8</div></div>
<div class="a" style="left:1183px;top:355px;width:67px;height:24px;overflow:hidden"><div class="t " style="left:2px;top:3.29px;font-size:14.6px;line-height:18px;color:#000;">-- / 0</div></div>
<div class="a" style="left:1251px;top:355px;width:68px;height:24px;overflow:hidden"><div class="t " style="left:2px;top:3.29px;font-size:14.6px;line-height:18px;color:#000;">-- / 0</div></div>
<div class="a" style="left:1320px;top:355px;width:69px;height:24px;overflow:hidden"><div class="t " style="left:2px;top:3.29px;font-size:14.6px;line-height:18px;color:#000;">-- / 0</div></div>
<div class="a" style="left:29px;top:381px;width:18px;height:16px;border:1px solid #6a6a6a;box-sizing:border-box;background:#fff"></div>
<div class="t " style="left:74px;top:381.98px;font-size:14.6px;line-height:18px;color:#000;">03352</div>
<div class="t " style="left:171.8px;top:381.98px;font-size:14.6px;line-height:18px;color:#000;letter-spacing:0.187px">р.Оччугуй-Ботуобуйа - пос.Туус</div>
<div class="t " style="left:473px;top:381.98px;font-size:14.6px;line-height:18px;color:#000;">10600</div>
<div class="a" style="left:559px;top:379px;width:69px;height:24px;overflow:hidden"><div class="t " style="left:2px;top:2.98px;font-size:14.6px;line-height:18px;color:#000;">0.242 / 6</div></div>
<div class="a" style="left:629px;top:379px;width:68px;height:24px;overflow:hidden"><div class="t " style="left:2px;top:2.98px;font-size:14.6px;line-height:18px;color:#000;">-- / 0</div></div>
<div class="a" style="left:698px;top:379px;width:69px;height:24px;overflow:hidden"><div class="t " style="left:2px;top:2.98px;font-size:14.6px;line-height:18px;color:#000;">0.295 / 6</div></div>
<div class="a" style="left:768px;top:379px;width:68px;height:24px;overflow:hidden"><div class="t " style="left:2px;top:2.98px;font-size:14.6px;line-height:18px;color:#000;">0.369 / 6</div></div>
<div class="a" style="left:837px;top:379px;width:69px;height:24px;overflow:hidden"><div class="t " style="left:2px;top:2.98px;font-size:14.6px;line-height:18px;color:#000;">0.591 / 6</div></div>
<div class="a" style="left:907px;top:379px;width:69px;height:24px;overflow:hidden"><div class="t " style="left:2px;top:2.98px;font-size:14.6px;line-height:18px;color:#000;">0.395 / 6</div></div>
<div class="a" style="left:977px;top:379px;width:68px;height:24px;overflow:hidden"><div class="t " style="left:2px;top:2.98px;font-size:14.6px;line-height:18px;color:#000;">0.355 / 6</div></div>
<div class="a" style="left:1046px;top:379px;width:67px;height:24px;overflow:hidden"><div class="t " style="left:2px;top:2.98px;font-size:14.6px;line-height:18px;color:#000;">-- / 0</div></div>
<div class="a" style="left:1114px;top:379px;width:68px;height:24px;overflow:hidden"><div class="t " style="left:2px;top:2.98px;font-size:14.6px;line-height:18px;color:#000;">0.251 / 6</div></div>
<div class="a" style="left:1183px;top:379px;width:67px;height:24px;overflow:hidden"><div class="t " style="left:2px;top:2.98px;font-size:14.6px;line-height:18px;color:#000;">-- / 0</div></div>
<div class="a" style="left:1251px;top:379px;width:68px;height:24px;overflow:hidden"><div class="t " style="left:2px;top:2.98px;font-size:14.6px;line-height:18px;color:#000;">-- / 0</div></div>
<div class="a" style="left:1320px;top:379px;width:69px;height:24px;overflow:hidden"><div class="t " style="left:2px;top:2.98px;font-size:14.6px;line-height:18px;color:#000;">-- / 0</div></div>
<div class="a" style="left:29px;top:405px;width:18px;height:16px;border:1px solid #6a6a6a;box-sizing:border-box;background:#fff"></div>
<div class="t " style="left:74px;top:405.67px;font-size:14.6px;line-height:18px;color:#000;">03353</div>
<div class="t " style="left:171.8px;top:405.67px;font-size:14.6px;line-height:18px;color:#000;letter-spacing:-0.093px">Р.ИИРЭЛЭЭХ - 6.0 КМ ВЫШЕ Г.МИРНЫЙ</div>
<div class="t " style="left:473px;top:405.67px;font-size:14.6px;line-height:18px;color:#000;">598</div>
<div class="a" style="left:559px;top:403px;width:69px;height:23px;overflow:hidden"><div class="t " style="left:2px;top:2.67px;font-size:14.6px;line-height:18px;color:#000;">0.185 / 3</div></div>
<div class="a" style="left:629px;top:403px;width:68px;height:23px;overflow:hidden"><div class="t " style="left:2px;top:2.67px;font-size:14.6px;line-height:18px;color:#000;">-- / 0</div></div>
<div class="a" style="left:698px;top:403px;width:69px;height:23px;overflow:hidden"><div class="t " style="left:2px;top:2.67px;font-size:14.6px;line-height:18px;color:#000;">0.293 / 3</div></div>
<div class="a" style="left:768px;top:403px;width:68px;height:23px;overflow:hidden"><div class="t " style="left:2px;top:2.67px;font-size:14.6px;line-height:18px;color:#000;">0.268 / 3</div></div>
<div class="a" style="left:837px;top:403px;width:69px;height:23px;overflow:hidden"><div class="t " style="left:2px;top:2.67px;font-size:14.6px;line-height:18px;color:#000;">0.370 / 3</div></div>
<div class="a" style="left:907px;top:403px;width:69px;height:23px;overflow:hidden"><div class="t " style="left:2px;top:2.67px;font-size:14.6px;line-height:18px;color:#000;">0.205 / 3</div></div>
<div class="a" style="left:977px;top:403px;width:68px;height:23px;overflow:hidden"><div class="t " style="left:2px;top:2.67px;font-size:14.6px;line-height:18px;color:#000;">0.228 / 3</div></div>
<div class="a" style="left:1046px;top:403px;width:67px;height:23px;overflow:hidden"><div class="t " style="left:2px;top:2.67px;font-size:14.6px;line-height:18px;color:#000;">-- / 0</div></div>
<div class="a" style="left:1114px;top:403px;width:68px;height:23px;overflow:hidden"><div class="t " style="left:2px;top:2.67px;font-size:14.6px;line-height:18px;color:#000;">0.211 / 3</div></div>
<div class="a" style="left:1183px;top:403px;width:67px;height:23px;overflow:hidden"><div class="t " style="left:2px;top:2.67px;font-size:14.6px;line-height:18px;color:#000;">-- / 0</div></div>
<div class="a" style="left:1251px;top:403px;width:68px;height:23px;overflow:hidden"><div class="t " style="left:2px;top:2.67px;font-size:14.6px;line-height:18px;color:#000;">-- / 0</div></div>
<div class="a" style="left:1320px;top:403px;width:69px;height:23px;overflow:hidden"><div class="t " style="left:2px;top:2.67px;font-size:14.6px;line-height:18px;color:#000;">-- / 0</div></div>
<div class="a" style="left:29px;top:429px;width:18px;height:16px;border:1px solid #6a6a6a;box-sizing:border-box;background:#fff"></div>
<div class="t " style="left:74px;top:429.36px;font-size:14.6px;line-height:18px;color:#000;">03354</div>
<div class="t " style="left:171.8px;top:429.36px;font-size:14.6px;line-height:18px;color:#000;letter-spacing:0.0px">Р.ИИРЭЛЭЭХ - Г.МИРНЫЙ</div>
<div class="t " style="left:473px;top:429.36px;font-size:14.6px;line-height:18px;color:#000;">640</div>
<div class="a" style="left:559px;top:426px;width:69px;height:24px;overflow:hidden"><div class="t " style="left:2px;top:3.36px;font-size:14.6px;line-height:18px;color:#000;">-0.020 / 3</div></div>
<div class="a" style="left:629px;top:426px;width:68px;height:24px;overflow:hidden"><div class="t " style="left:2px;top:3.36px;font-size:14.6px;line-height:18px;color:#000;">-- / 0</div></div>
<div class="a" style="left:698px;top:426px;width:69px;height:24px;overflow:hidden"><div class="t " style="left:2px;top:3.36px;font-size:14.6px;line-height:18px;color:#000;">0.025 / 3</div></div>
<div class="a" style="left:768px;top:426px;width:68px;height:24px;overflow:hidden"><div class="t " style="left:2px;top:3.36px;font-size:14.6px;line-height:18px;color:#000;">0.162 / 3</div></div>
<div class="a" style="left:837px;top:426px;width:69px;height:24px;overflow:hidden"><div class="t " style="left:2px;top:3.36px;font-size:14.6px;line-height:18px;color:#000;">0.453 / 3</div></div>
<div class="a" style="left:907px;top:426px;width:69px;height:24px;overflow:hidden"><div class="t " style="left:2px;top:3.36px;font-size:14.6px;line-height:18px;color:#000;">0.063 / 3</div></div>
<div class="a" style="left:977px;top:426px;width:68px;height:24px;overflow:hidden"><div class="t " style="left:2px;top:3.36px;font-size:14.6px;line-height:18px;color:#000;">0.224 / 3</div></div>
<div class="a" style="left:1046px;top:426px;width:67px;height:24px;overflow:hidden"><div class="t " style="left:2px;top:3.36px;font-size:14.6px;line-height:18px;color:#000;">-- / 0</div></div>
<div class="a" style="left:1114px;top:426px;width:68px;height:24px;overflow:hidden"><div class="t " style="left:2px;top:3.36px;font-size:14.6px;line-height:18px;color:#000;">0.181 / 3</div></div>
<div class="a" style="left:1183px;top:426px;width:67px;height:24px;overflow:hidden"><div class="t " style="left:2px;top:3.36px;font-size:14.6px;line-height:18px;color:#000;">-- / 0</div></div>
<div class="a" style="left:1251px;top:426px;width:68px;height:24px;overflow:hidden"><div class="t " style="left:2px;top:3.36px;font-size:14.6px;line-height:18px;color:#000;">-- / 0</div></div>
<div class="a" style="left:1320px;top:426px;width:69px;height:24px;overflow:hidden"><div class="t " style="left:2px;top:3.36px;font-size:14.6px;line-height:18px;color:#000;">-- / 0</div></div>
<div class="a" style="left:29px;top:452px;width:18px;height:16px;border:1px solid #6a6a6a;box-sizing:border-box;background:#fff"></div>
<div class="t " style="left:74px;top:453.05px;font-size:14.6px;line-height:18px;color:#000;">03355</div>
<div class="t " style="left:171.8px;top:453.05px;font-size:14.6px;line-height:18px;color:#000;letter-spacing:-0.143px">Р.УЛАХАН-БОТУОБУЙА - ГП ЗАХАР</div>
<div class="t " style="left:473px;top:453.05px;font-size:14.6px;line-height:18px;color:#000;">16900</div>
<div class="a" style="left:559px;top:450px;width:69px;height:24px;overflow:hidden"><div class="t " style="left:2px;top:3.05px;font-size:14.6px;line-height:18px;color:#000;">-- / 0</div></div>
<div class="a" style="left:630px;top:451px;width:66px;height:21px;background:#1e90ff"></div>
<div class="a" style="left:629px;top:450px;width:68px;height:24px;overflow:hidden"><div class="t " style="left:2px;top:3.05px;font-size:14.6px;line-height:18px;color:#000;">0.977 / 8</div></div>
<div class="a" style="left:698px;top:450px;width:69px;height:24px;overflow:hidden"><div class="t " style="left:2px;top:3.05px;font-size:14.6px;line-height:18px;color:#000;">0.189 / 29</div></div>
<div class="a" style="left:768px;top:450px;width:68px;height:24px;overflow:hidden"><div class="t " style="left:2px;top:3.05px;font-size:14.6px;line-height:18px;color:#000;">0.214 / 30</div></div>
<div class="a" style="left:837px;top:450px;width:69px;height:24px;overflow:hidden"><div class="t " style="left:2px;top:3.05px;font-size:14.6px;line-height:18px;color:#000;">-- / 0</div></div>
<div class="a" style="left:907px;top:450px;width:69px;height:24px;overflow:hidden"><div class="t " style="left:2px;top:3.05px;font-size:14.6px;line-height:18px;color:#000;">0.066 / 29</div></div>
<div class="a" style="left:977px;top:450px;width:68px;height:24px;overflow:hidden"><div class="t " style="left:2px;top:3.05px;font-size:14.6px;line-height:18px;color:#000;">0.144 / 30</div></div>
<div class="a" style="left:1046px;top:450px;width:67px;height:24px;overflow:hidden"><div class="t " style="left:2px;top:3.05px;font-size:14.6px;line-height:18px;color:#000;">-- / 0</div></div>
<div class="a" style="left:1114px;top:450px;width:68px;height:24px;overflow:hidden"><div class="t " style="left:2px;top:3.05px;font-size:14.6px;line-height:18px;color:#000;">0.279 / 30</div></div>
<div class="a" style="left:1183px;top:450px;width:67px;height:24px;overflow:hidden"><div class="t " style="left:2px;top:3.05px;font-size:14.6px;line-height:18px;color:#000;">-- / 0</div></div>
<div class="a" style="left:1251px;top:450px;width:68px;height:24px;overflow:hidden"><div class="t " style="left:2px;top:3.05px;font-size:14.6px;line-height:18px;color:#000;">0.541 / 29</div></div>
<div class="a" style="left:1320px;top:450px;width:69px;height:24px;overflow:hidden"><div class="t " style="left:2px;top:3.05px;font-size:14.6px;line-height:18px;color:#000;">-- / 0</div></div>
<div class="a" style="left:29px;top:476px;width:18px;height:16px;border:1px solid #6a6a6a;box-sizing:border-box;background:#fff"></div>
<div class="t " style="left:74px;top:476.74px;font-size:14.6px;line-height:18px;color:#000;">03358</div>
<div class="t " style="left:171.8px;top:476.74px;font-size:14.6px;line-height:18px;color:#000;letter-spacing:0.089px">р.Кэнгкэмэ - 2.5 км от устья</div>
<div class="t " style="left:473px;top:476.74px;font-size:14.6px;line-height:18px;color:#000;">140</div>
<div class="a" style="left:559px;top:474px;width:69px;height:23px;overflow:hidden"><div class="t " style="left:2px;top:2.74px;font-size:14.6px;line-height:18px;color:#000;">0.530 / 20</div></div>
<div class="a" style="left:629px;top:474px;width:68px;height:23px;overflow:hidden"><div class="t " style="left:2px;top:2.74px;font-size:14.6px;line-height:18px;color:#000;">0.337 / 27</div></div>
<div class="a" style="left:698px;top:474px;width:69px;height:23px;overflow:hidden"><div class="t " style="left:2px;top:2.74px;font-size:14.6px;line-height:18px;color:#000;">0.241 / 27</div></div>
<div class="a" style="left:768px;top:474px;width:68px;height:23px;overflow:hidden"><div class="t " style="left:2px;top:2.74px;font-size:14.6px;line-height:18px;color:#000;">0.326 / 27</div></div>
<div class="a" style="left:837px;top:474px;width:69px;height:23px;overflow:hidden"><div class="t " style="left:2px;top:2.74px;font-size:14.6px;line-height:18px;color:#000;">0.498 / 24</div></div>
<div class="a" style="left:907px;top:474px;width:69px;height:23px;overflow:hidden"><div class="t " style="left:2px;top:2.74px;font-size:14.6px;line-height:18px;color:#000;">0.241 / 27</div></div>
<div class="a" style="left:977px;top:474px;width:68px;height:23px;overflow:hidden"><div class="t " style="left:2px;top:2.74px;font-size:14.6px;line-height:18px;color:#000;">0.190 / 27</div></div>
<div class="a" style="left:1046px;top:474px;width:67px;height:23px;overflow:hidden"><div class="t " style="left:2px;top:2.74px;font-size:14.6px;line-height:18px;color:#000;">-- / 0</div></div>
<div class="a" style="left:1115px;top:475px;width:66px;height:20px;background:#87cefa"></div>
<div class="a" style="left:1114px;top:474px;width:68px;height:23px;overflow:hidden"><div class="t " style="left:2px;top:2.74px;font-size:14.6px;line-height:18px;color:#000;">0.835 / 10</div></div>
<div class="a" style="left:1183px;top:474px;width:67px;height:23px;overflow:hidden"><div class="t " style="left:2px;top:2.74px;font-size:14.6px;line-height:18px;color:#000;">0.256 / 9</div></div>
<div class="a" style="left:1251px;top:474px;width:68px;height:23px;overflow:hidden"><div class="t " style="left:2px;top:2.74px;font-size:14.6px;line-height:18px;color:#000;">0.561 / 22</div></div>
<div class="a" style="left:1320px;top:474px;width:69px;height:23px;overflow:hidden"><div class="t " style="left:2px;top:2.74px;font-size:14.6px;line-height:18px;color:#000;">0.565 / 20</div></div>
<div class="a" style="left:29px;top:500px;width:18px;height:16px;border:1px solid #6a6a6a;box-sizing:border-box;background:#fff"></div>
<div class="t " style="left:74px;top:500.43px;font-size:14.6px;line-height:18px;color:#000;">03359</div>
<div class="t " style="left:171.8px;top:500.43px;font-size:14.6px;line-height:18px;color:#000;letter-spacing:0.029px">Р.КЭМПЭНДЭЭЙИ - ГМ.СТ.ЧАЙНГДА</div>
<div class="t " style="left:473px;top:500.43px;font-size:14.6px;line-height:18px;color:#000;">102</div>
<div class="a" style="left:559px;top:497px;width:69px;height:24px;overflow:hidden"><div class="t " style="left:2px;top:3.43px;font-size:14.6px;line-height:18px;color:#000;">0.161 / 23</div></div>
<div class="a" style="left:629px;top:497px;width:68px;height:24px;overflow:hidden"><div class="t " style="left:2px;top:3.43px;font-size:14.6px;line-height:18px;color:#000;">0.057 / 25</div></div>
<div class="a" style="left:698px;top:497px;width:69px;height:24px;overflow:hidden"><div class="t " style="left:2px;top:3.43px;font-size:14.6px;line-height:18px;color:#000;">0.074 / 25</div></div>
<div class="a" style="left:768px;top:497px;width:68px;height:24px;overflow:hidden"><div class="t " style="left:2px;top:3.43px;font-size:14.6px;line-height:18px;color:#000;">0.073 / 25</div></div>
<div class="a" style="left:837px;top:497px;width:69px;height:24px;overflow:hidden"><div class="t " style="left:2px;top:3.43px;font-size:14.6px;line-height:18px;color:#000;">0.490 / 25</div></div>
<div class="a" style="left:907px;top:497px;width:69px;height:24px;overflow:hidden"><div class="t " style="left:2px;top:3.43px;font-size:14.6px;line-height:18px;color:#000;">0.216 / 25</div></div>
<div class="a" style="left:977px;top:497px;width:68px;height:24px;overflow:hidden"><div class="t " style="left:2px;top:3.43px;font-size:14.6px;line-height:18px;color:#000;">0.306 / 25</div></div>
<div class="a" style="left:1046px;top:497px;width:67px;height:24px;overflow:hidden"><div class="t " style="left:2px;top:3.43px;font-size:14.6px;line-height:18px;color:#000;">-- / 0</div></div>
<div class="a" style="left:1115px;top:498px;width:66px;height:21px;background:#e0ffff"></div>
<div class="a" style="left:1114px;top:497px;width:68px;height:24px;overflow:hidden"><div class="t " style="left:2px;top:3.43px;font-size:14.6px;line-height:18px;color:#000;">0.705 / 6</div></div>
<div class="a" style="left:1183px;top:497px;width:67px;height:24px;overflow:hidden"><div class="t " style="left:2px;top:3.43px;font-size:14.6px;line-height:18px;color:#000;">0.473 / 9</div></div>
<div class="a" style="left:1251px;top:497px;width:68px;height:24px;overflow:hidden"><div class="t " style="left:2px;top:3.43px;font-size:14.6px;line-height:18px;color:#000;">0.506 / 17</div></div>
<div class="a" style="left:1320px;top:497px;width:69px;height:24px;overflow:hidden"><div class="t " style="left:2px;top:3.43px;font-size:14.6px;line-height:18px;color:#000;">0.353 / 17</div></div>
<div class="a" style="left:29px;top:523px;width:18px;height:16px;border:1px solid #6a6a6a;box-sizing:border-box;background:#fff"></div>
<div class="t " style="left:74px;top:524.12px;font-size:14.6px;line-height:18px;color:#000;">03360</div>
<div class="t " style="left:171.8px;top:524.12px;font-size:14.6px;line-height:18px;color:#000;letter-spacing:-0.1px">Р.КЭМПЭНДЭЭЙИ - С.КЭМПЕНДЯЙ</div>
<div class="t " style="left:473px;top:524.12px;font-size:14.6px;line-height:18px;color:#000;">1290</div>
<div class="a" style="left:559px;top:521px;width:69px;height:24px;overflow:hidden"><div class="t " style="left:2px;top:3.12px;font-size:14.6px;line-height:18px;color:#000;">0.570 / 43</div></div>
<div class="a" style="left:629px;top:521px;width:68px;height:24px;overflow:hidden"><div class="t " style="left:2px;top:3.12px;font-size:14.6px;line-height:18px;color:#000;">0.399 / 34</div></div>
<div class="a" style="left:698px;top:521px;width:69px;height:24px;overflow:hidden"><div class="t " style="left:2px;top:3.12px;font-size:14.6px;line-height:18px;color:#000;">0.446 / 72</div></div>
<div class="a" style="left:768px;top:521px;width:68px;height:24px;overflow:hidden"><div class="t " style="left:2px;top:3.12px;font-size:14.6px;line-height:18px;color:#000;">0.618 / 75</div></div>
<div class="a" style="left:837px;top:521px;width:69px;height:24px;overflow:hidden"><div class="t " style="left:2px;top:3.12px;font-size:14.6px;line-height:18px;color:#000;">0.575 / 38</div></div>
<div class="a" style="left:907px;top:521px;width:69px;height:24px;overflow:hidden"><div class="t " style="left:2px;top:3.12px;font-size:14.6px;line-height:18px;color:#000;">0.467 / 70</div></div>
<div class="a" style="left:977px;top:521px;width:68px;height:24px;overflow:hidden"><div class="t " style="left:2px;top:3.12px;font-size:14.6px;line-height:18px;color:#000;">0.559 / 70</div></div>
<div class="a" style="left:1046px;top:521px;width:67px;height:24px;overflow:hidden"><div class="t " style="left:2px;top:3.12px;font-size:14.6px;line-height:18px;color:#000;">0.390 / 4</div></div>
<div class="a" style="left:1114px;top:521px;width:68px;height:24px;overflow:hidden"><div class="t " style="left:2px;top:3.12px;font-size:14.6px;line-height:18px;color:#000;">0.439 / 57</div></div>
<div class="a" style="left:1183px;top:521px;width:67px;height:24px;overflow:hidden"><div class="t " style="left:2px;top:3.12px;font-size:14.6px;line-height:18px;color:#000;">0.513 / 8</div></div>
<div class="a" style="left:1251px;top:521px;width:68px;height:24px;overflow:hidden"><div class="t " style="left:2px;top:3.12px;font-size:14.6px;line-height:18px;color:#000;">0.663 / 46</div></div>
<div class="a" style="left:1320px;top:521px;width:69px;height:24px;overflow:hidden"><div class="t " style="left:2px;top:3.12px;font-size:14.6px;line-height:18px;color:#000;">0.529 / 19</div></div>
<div class="a" style="left:29px;top:547px;width:18px;height:16px;border:1px solid #6a6a6a;box-sizing:border-box;background:#fff"></div>
<div class="t " style="left:74px;top:547.81px;font-size:14.6px;line-height:18px;color:#000;">03561</div>
<div class="t " style="left:171.8px;top:547.81px;font-size:14.6px;line-height:18px;color:#000;letter-spacing:0.307px">р.Оччугуй-Ботуобуйа - г.п.Новый</div>
<div class="t " style="left:473px;top:547.81px;font-size:14.6px;line-height:18px;color:#000;">6520</div>
<div class="a" style="left:559px;top:545px;width:69px;height:24px;overflow:hidden"><div class="t " style="left:2px;top:2.81px;font-size:14.6px;line-height:18px;color:#000;">0.246 / 6</div></div>
<div class="a" style="left:629px;top:545px;width:68px;height:24px;overflow:hidden"><div class="t " style="left:2px;top:2.81px;font-size:14.6px;line-height:18px;color:#000;">0.402 / 6</div></div>
<div class="a" style="left:698px;top:545px;width:69px;height:24px;overflow:hidden"><div class="t " style="left:2px;top:2.81px;font-size:14.6px;line-height:18px;color:#000;">0.230 / 6</div></div>
<div class="a" style="left:768px;top:545px;width:68px;height:24px;overflow:hidden"><div class="t " style="left:2px;top:2.81px;font-size:14.6px;line-height:18px;color:#000;">0.392 / 6</div></div>
<div class="a" style="left:837px;top:545px;width:69px;height:24px;overflow:hidden"><div class="t " style="left:2px;top:2.81px;font-size:14.6px;line-height:18px;color:#000;">0.538 / 6</div></div>
<div class="a" style="left:907px;top:545px;width:69px;height:24px;overflow:hidden"><div class="t " style="left:2px;top:2.81px;font-size:14.6px;line-height:18px;color:#000;">0.341 / 6</div></div>
<div class="a" style="left:977px;top:545px;width:68px;height:24px;overflow:hidden"><div class="t " style="left:2px;top:2.81px;font-size:14.6px;line-height:18px;color:#000;">0.345 / 6</div></div>
<div class="a" style="left:1046px;top:545px;width:67px;height:24px;overflow:hidden"><div class="t " style="left:2px;top:2.81px;font-size:14.6px;line-height:18px;color:#000;">-- / 0</div></div>
<div class="a" style="left:1114px;top:545px;width:68px;height:24px;overflow:hidden"><div class="t " style="left:2px;top:2.81px;font-size:14.6px;line-height:18px;color:#000;">-- / 0</div></div>
<div class="a" style="left:1183px;top:545px;width:67px;height:24px;overflow:hidden"><div class="t " style="left:2px;top:2.81px;font-size:14.6px;line-height:18px;color:#000;">-- / 0</div></div>
<div class="a" style="left:1251px;top:545px;width:68px;height:24px;overflow:hidden"><div class="t " style="left:2px;top:2.81px;font-size:14.6px;line-height:18px;color:#000;">0.264 / 6</div></div>
<div class="a" style="left:1320px;top:545px;width:69px;height:24px;overflow:hidden"><div class="t " style="left:2px;top:2.81px;font-size:14.6px;line-height:18px;color:#000;">0.263 / 6</div></div>
<div class="a" style="left:29px;top:571px;width:18px;height:16px;border:1px solid #6a6a6a;box-sizing:border-box;background:#fff"></div>
<div class="t " style="left:74px;top:571.50px;font-size:14.6px;line-height:18px;color:#000;">03574</div>
<div class="t " style="left:171.8px;top:571.50px;font-size:14.6px;line-height:18px;color:#000;letter-spacing:-0.078px">Р.НЮЯ - Г.П.НААХАРА</div>
<div class="t " style="left:473px;top:571.50px;font-size:14.6px;line-height:18px;color:#000;">23200</div>
<div class="a" style="left:560px;top:570px;width:67px;height:20px;background:#e0ffff"></div>
<div class="a" style="left:559px;top:569px;width:69px;height:23px;overflow:hidden"><div class="t " style="left:2px;top:2.50px;font-size:14.6px;line-height:18px;color:#000;">0.758 / 10</div></div>
<div class="a" style="left:629px;top:569px;width:68px;height:23px;overflow:hidden"><div class="t " style="left:2px;top:2.50px;font-size:14.6px;line-height:18px;color:#000;">0.401 / 12</div></div>
<div class="a" style="left:698px;top:569px;width:69px;height:23px;overflow:hidden"><div class="t " style="left:2px;top:2.50px;font-size:14.6px;line-height:18px;color:#000;">0.307 / 12</div></div>
<div class="a" style="left:768px;top:569px;width:68px;height:23px;overflow:hidden"><div class="t " style="left:2px;top:2.50px;font-size:14.6px;line-height:18px;color:#000;">0.372 / 12</div></div>
<div class="a" style="left:837px;top:569px;width:69px;height:23px;overflow:hidden"><div class="t " style="left:2px;top:2.50px;font-size:14.6px;line-height:18px;color:#000;">0.507 / 12</div></div>
<div class="a" style="left:907px;top:569px;width:69px;height:23px;overflow:hidden"><div class="t " style="left:2px;top:2.50px;font-size:14.6px;line-height:18px;color:#000;">0.274 / 12</div></div>
<div class="a" style="left:977px;top:569px;width:68px;height:23px;overflow:hidden"><div class="t " style="left:2px;top:2.50px;font-size:14.6px;line-height:18px;color:#000;">0.382 / 12</div></div>
<div class="a" style="left:1046px;top:569px;width:67px;height:23px;overflow:hidden"><div class="t " style="left:2px;top:2.50px;font-size:14.6px;line-height:18px;color:#000;">-- / 0</div></div>
<div class="a" style="left:1115px;top:570px;width:66px;height:20px;background:#ffff00"></div>
<div class="a" style="left:1114px;top:569px;width:68px;height:23px;overflow:hidden"><div class="t " style="left:2px;top:2.50px;font-size:14.6px;line-height:18px;color:#000;">0.969 / 5</div></div>
<div class="a" style="left:1184px;top:570px;width:65px;height:20px;background:#ffff00"></div>
<div class="a" style="left:1183px;top:569px;width:67px;height:23px;overflow:hidden"><div class="t " style="left:2px;top:2.50px;font-size:14.6px;line-height:18px;color:#000;">0.746 / 3</div></div>
<div class="a" style="left:1251px;top:569px;width:68px;height:23px;overflow:hidden"><div class="t " style="left:2px;top:2.50px;font-size:14.6px;line-height:18px;color:#000;">0.281 / 12</div></div>
<div class="a" style="left:1320px;top:569px;width:69px;height:23px;overflow:hidden"><div class="t " style="left:2px;top:2.50px;font-size:14.6px;line-height:18px;color:#000;">0.456 / 12</div></div>
<div class="a" style="left:29px;top:595px;width:18px;height:16px;border:1px solid #6a6a6a;box-sizing:border-box;background:#fff"></div>
<svg class="a" style="left:29px;top:595px" width="18" height="16"><path d="M3.8 8.3L8.4 12.6L14.4 2.6" fill="none" stroke="#1a1a1a" stroke-width="2.7" stroke-linejoin="bevel"/></svg>
<div class="t " style="left:74px;top:595.19px;font-size:14.6px;line-height:18px;color:#000;">03599</div>
<div class="t " style="left:171.8px;top:595.19px;font-size:14.6px;line-height:18px;color:#000;letter-spacing:-0.234px">Р.УЛАХАН-НЫРЫЫЛААХ - ГП ЕЛОВЫЙ</div>
<div class="t " style="left:473px;top:595.19px;font-size:14.6px;line-height:18px;color:#000;">61.7</div>
<div class="a" style="left:560px;top:593px;width:67px;height:21px;background:#1e90ff"></div>
<div class="a" style="left:559px;top:592px;width:69px;height:24px;overflow:hidden"><div class="t " style="left:2px;top:3.19px;font-size:14.6px;line-height:18px;color:#000;">0.954 / 9</div></div>
<div class="a" style="left:630px;top:593px;width:66px;height:21px;background:#1e90ff"></div>
<div class="a" style="left:629px;top:592px;width:68px;height:24px;overflow:hidden"><div class="t " style="left:2px;top:3.19px;font-size:14.6px;line-height:18px;color:#000;">0.903 / 21</div></div>
<div class="a" style="left:698px;top:592px;width:69px;height:24px;overflow:hidden"><div class="t " style="left:2px;top:3.19px;font-size:14.6px;line-height:18px;color:#000;">0.427 / 41</div></div>
<div class="a" style="left:768px;top:592px;width:68px;height:24px;overflow:hidden"><div class="t " style="left:2px;top:3.19px;font-size:14.6px;line-height:18px;color:#000;">0.507 / 42</div></div>
<div class="a" style="left:838px;top:593px;width:67px;height:21px;background:#87cefa"></div>
<div class="a" style="left:837px;top:592px;width:69px;height:24px;overflow:hidden"><div class="t " style="left:2px;top:3.19px;font-size:14.6px;line-height:18px;color:#000;">0.867 / 13</div></div>
<div class="a" style="left:907px;top:592px;width:69px;height:24px;overflow:hidden"><div class="t " style="left:2px;top:3.19px;font-size:14.6px;line-height:18px;color:#000;">0.291 / 41</div></div>
<div class="a" style="left:977px;top:592px;width:68px;height:24px;overflow:hidden"><div class="t " style="left:2px;top:3.19px;font-size:14.6px;line-height:18px;color:#000;">0.436 / 42</div></div>
<div class="a" style="left:1046px;top:592px;width:67px;height:24px;overflow:hidden"><div class="t " style="left:2px;top:3.19px;font-size:14.6px;line-height:18px;color:#000;">-- / 0</div></div>
<div class="a" style="left:1114px;top:592px;width:68px;height:24px;overflow:hidden"><div class="t " style="left:2px;top:3.19px;font-size:14.6px;line-height:18px;color:#000;">0.545 / 36</div></div>
<div class="a" style="left:1183px;top:592px;width:67px;height:24px;overflow:hidden"><div class="t " style="left:2px;top:3.19px;font-size:14.6px;line-height:18px;color:#000;">-- / 0</div></div>
<div class="a" style="left:1251px;top:592px;width:68px;height:24px;overflow:hidden"><div class="t " style="left:2px;top:3.19px;font-size:14.6px;line-height:18px;color:#000;">0.523 / 42</div></div>
<div class="a" style="left:1321px;top:593px;width:67px;height:21px;background:#87cefa"></div>
<div class="a" style="left:1320px;top:592px;width:69px;height:24px;overflow:hidden"><div class="t " style="left:2px;top:3.19px;font-size:14.6px;line-height:18px;color:#000;">0.807 / 14</div></div>
<div class="a" style="left:29px;top:618px;width:18px;height:16px;border:1px solid #6a6a6a;box-sizing:border-box;background:#fff"></div>
<div class="t " style="left:74px;top:618.88px;font-size:14.6px;line-height:18px;color:#000;">03625</div>
<div class="t " style="left:171.8px;top:618.88px;font-size:14.6px;line-height:18px;color:#000;letter-spacing:0.38px">р.Ичода - г.п.Майский</div>
<div class="t " style="left:473px;top:618.88px;font-size:14.6px;line-height:18px;color:#000;">2820</div>
<div class="a" style="left:560px;top:617px;width:67px;height:21px;background:#1e90ff"></div>
<div class="a" style="left:559px;top:616px;width:69px;height:24px;overflow:hidden"><div class="t " style="left:2px;top:2.88px;font-size:14.6px;line-height:18px;color:#000;">0.915 / 16</div></div>
<div class="a" style="left:630px;top:617px;width:66px;height:21px;background:#e0ffff"></div>
<div class="a" style="left:629px;top:616px;width:68px;height:24px;overflow:hidden"><div class="t " style="left:2px;top:2.88px;font-size:14.6px;line-height:18px;color:#000;">0.737 / 28</div></div>
<div class="a" style="left:698px;top:616px;width:69px;height:24px;overflow:hidden"><div class="t " style="left:2px;top:2.88px;font-size:14.6px;line-height:18px;color:#000;">0.548 / 47</div></div>
<div class="a" style="left:768px;top:616px;width:68px;height:24px;overflow:hidden"><div class="t " style="left:2px;top:2.88px;font-size:14.6px;line-height:18px;color:#000;">0.505 / 48</div></div>
<div class="a" style="left:838px;top:617px;width:67px;height:21px;background:#e0ffff"></div>
<div class="a" style="left:837px;top:616px;width:69px;height:24px;overflow:hidden"><div class="t " style="left:2px;top:2.88px;font-size:14.6px;line-height:18px;color:#000;">0.744 / 20</div></div>
<div class="a" style="left:907px;top:616px;width:69px;height:24px;overflow:hidden"><div class="t " style="left:2px;top:2.88px;font-size:14.6px;line-height:18px;color:#000;">0.190 / 47</div></div>
<div class="a" style="left:977px;top:616px;width:68px;height:24px;overflow:hidden"><div class="t " style="left:2px;top:2.88px;font-size:14.6px;line-height:18px;color:#000;">0.267 / 48</div></div>
<div class="a" style="left:1046px;top:616px;width:67px;height:24px;overflow:hidden"><div class="t " style="left:2px;top:2.88px;font-size:14.6px;line-height:18px;color:#000;">-- / 0</div></div>
<div class="a" style="left:1115px;top:617px;width:66px;height:21px;background:#e0ffff"></div>
<div class="a" style="left:1114px;top:616px;width:68px;height:24px;overflow:hidden"><div class="t " style="left:2px;top:2.88px;font-size:14.6px;line-height:18px;color:#000;">0.795 / 35</div></div>
<div class="a" style="left:1183px;top:616px;width:67px;height:24px;overflow:hidden"><div class="t " style="left:2px;top:2.88px;font-size:14.6px;line-height:18px;color:#000;">0.260 / 9</div></div>
<div class="a" style="left:1252px;top:617px;width:66px;height:21px;background:#1e90ff"></div>
<div class="a" style="left:1251px;top:616px;width:68px;height:24px;overflow:hidden"><div class="t " style="left:2px;top:2.88px;font-size:14.6px;line-height:18px;color:#000;">0.917 / 47</div></div>
<div class="a" style="left:1320px;top:616px;width:69px;height:24px;overflow:hidden"><div class="t " style="left:2px;top:2.88px;font-size:14.6px;line-height:18px;color:#000;">0.542 / 20</div></div>
<div class="a" style="left:29px;top:642px;width:18px;height:16px;border:1px solid #6a6a6a;box-sizing:border-box;background:#fff"></div>
<div class="t " style="left:74px;top:642.57px;font-size:14.6px;line-height:18px;color:#000;">03652</div>
<div class="t " style="left:171.8px;top:642.57px;font-size:14.6px;line-height:18px;color:#000;letter-spacing:0px">Р.УЛАХАН-МУРБАЙЫ - ПОС.ОТРАДНЫЙ</div>
<div class="t " style="left:473px;top:642.57px;font-size:14.6px;line-height:18px;color:#000;">4030</div>
<div class="a" style="left:560px;top:641px;width:67px;height:20px;background:#ffff00"></div>
<div class="a" style="left:559px;top:640px;width:69px;height:23px;overflow:hidden"><div class="t " style="left:2px;top:2.57px;font-size:14.6px;line-height:18px;color:#000;">0.727 / 4</div></div>
<div class="a" style="left:629px;top:640px;width:68px;height:23px;overflow:hidden"><div class="t " style="left:2px;top:2.57px;font-size:14.6px;line-height:18px;color:#000;">0.257 / 7</div></div>
<div class="a" style="left:698px;top:640px;width:69px;height:23px;overflow:hidden"><div class="t " style="left:2px;top:2.57px;font-size:14.6px;line-height:18px;color:#000;">0.104 / 7</div></div>
<div class="a" style="left:768px;top:640px;width:68px;height:23px;overflow:hidden"><div class="t " style="left:2px;top:2.57px;font-size:14.6px;line-height:18px;color:#000;">0.247 / 7</div></div>
<div class="a" style="left:837px;top:640px;width:69px;height:23px;overflow:hidden"><div class="t " style="left:2px;top:2.57px;font-size:14.6px;line-height:18px;color:#000;">0.030 / 7</div></div>
<div class="a" style="left:907px;top:640px;width:69px;height:23px;overflow:hidden"><div class="t " style="left:2px;top:2.57px;font-size:14.6px;line-height:18px;color:#000;">-0.033 / 7</div></div>
<div class="a" style="left:977px;top:640px;width:68px;height:23px;overflow:hidden"><div class="t " style="left:2px;top:2.57px;font-size:14.6px;line-height:18px;color:#000;">0.265 / 7</div></div>
<div class="a" style="left:1046px;top:640px;width:67px;height:23px;overflow:hidden"><div class="t " style="left:2px;top:2.57px;font-size:14.6px;line-height:18px;color:#000;">-- / 0</div></div>
<div class="a" style="left:1114px;top:640px;width:68px;height:23px;overflow:hidden"><div class="t " style="left:2px;top:2.57px;font-size:14.6px;line-height:18px;color:#000;">0.575 / 6</div></div>
<div class="a" style="left:1183px;top:640px;width:67px;height:23px;overflow:hidden"><div class="t " style="left:2px;top:2.57px;font-size:14.6px;line-height:18px;color:#000;">-- / 0</div></div>
<div class="a" style="left:1251px;top:640px;width:68px;height:23px;overflow:hidden"><div class="t " style="left:2px;top:2.57px;font-size:14.6px;line-height:18px;color:#000;">0.330 / 7</div></div>
<div class="a" style="left:1320px;top:640px;width:69px;height:23px;overflow:hidden"><div class="t " style="left:2px;top:2.57px;font-size:14.6px;line-height:18px;color:#000;">0.333 / 7</div></div>
<div class="a" style="left:68px;top:0px;width:1px;height:648px;background:#d4d4d4"></div>
<div class="a" style="left:166px;top:0px;width:1px;height:648px;background:#d4d4d4"></div>
<div class="a" style="left:467px;top:0px;width:1px;height:648px;background:#d4d4d4"></div>
<div class="a" style="left:557px;top:0px;width:1px;height:648px;background:#d4d4d4"></div>
<div class="a" style="left:627px;top:0px;width:1px;height:648px;background:#d4d4d4"></div>
<div class="a" style="left:696px;top:0px;width:1px;height:648px;background:#d4d4d4"></div>
<div class="a" style="left:766px;top:0px;width:1px;height:648px;background:#d4d4d4"></div>
<div class="a" style="left:835px;top:0px;width:1px;height:648px;background:#d4d4d4"></div>
<div class="a" style="left:905px;top:0px;width:1px;height:648px;background:#d4d4d4"></div>
<div class="a" style="left:975px;top:0px;width:1px;height:648px;background:#d4d4d4"></div>
<div class="a" style="left:1044px;top:0px;width:1px;height:648px;background:#d4d4d4"></div>
<div class="a" style="left:1112px;top:0px;width:1px;height:648px;background:#d4d4d4"></div>
<div class="a" style="left:1181px;top:0px;width:1px;height:648px;background:#d4d4d4"></div>
<div class="a" style="left:1249px;top:0px;width:1px;height:648px;background:#d4d4d4"></div>
<div class="a" style="left:1318px;top:0px;width:1px;height:648px;background:#d4d4d4"></div>
<div class="a" style="left:1388px;top:0px;width:1px;height:648px;background:#d4d4d4"></div>
<div class="a" style="left:8px;top:22px;width:1381px;height:1px;background:#b4b4b4"></div>
<div class="a" style="left:8px;top:23px;width:1381px;height:1px;background:#000"></div>
<div class="a" style="left:0px;top:23px;width:8px;height:1px;background:#dcdcdc"></div>
<div class="a" style="left:8px;top:45px;width:1381px;height:1px;background:#b4b4b4"></div>
<div class="a" style="left:8px;top:46px;width:1381px;height:1px;background:#000"></div>
<div class="a" style="left:0px;top:46px;width:8px;height:1px;background:#dcdcdc"></div>
<div class="a" style="left:8px;top:69px;width:1381px;height:1px;background:#b4b4b4"></div>
<div class="a" style="left:8px;top:70px;width:1381px;height:1px;background:#000"></div>
<div class="a" style="left:0px;top:70px;width:8px;height:1px;background:#dcdcdc"></div>
<div class="a" style="left:8px;top:93px;width:1381px;height:1px;background:#b4b4b4"></div>
<div class="a" style="left:8px;top:94px;width:1381px;height:1px;background:#000"></div>
<div class="a" style="left:0px;top:94px;width:8px;height:1px;background:#dcdcdc"></div>
<div class="a" style="left:8px;top:116px;width:1381px;height:1px;background:#b4b4b4"></div>
<div class="a" style="left:8px;top:117px;width:1381px;height:1px;background:#000"></div>
<div class="a" style="left:0px;top:117px;width:8px;height:1px;background:#dcdcdc"></div>
<div class="a" style="left:8px;top:140px;width:1381px;height:1px;background:#b4b4b4"></div>
<div class="a" style="left:8px;top:141px;width:1381px;height:1px;background:#000"></div>
<div class="a" style="left:0px;top:141px;width:8px;height:1px;background:#dcdcdc"></div>
<div class="a" style="left:8px;top:164px;width:1381px;height:1px;background:#b4b4b4"></div>
<div class="a" style="left:8px;top:165px;width:1381px;height:1px;background:#000"></div>
<div class="a" style="left:0px;top:165px;width:8px;height:1px;background:#dcdcdc"></div>
<div class="a" style="left:8px;top:188px;width:1381px;height:1px;background:#b4b4b4"></div>
<div class="a" style="left:8px;top:189px;width:1381px;height:1px;background:#000"></div>
<div class="a" style="left:0px;top:189px;width:8px;height:1px;background:#dcdcdc"></div>
<div class="a" style="left:8px;top:211px;width:1381px;height:1px;background:#b4b4b4"></div>
<div class="a" style="left:8px;top:212px;width:1381px;height:1px;background:#000"></div>
<div class="a" style="left:0px;top:212px;width:8px;height:1px;background:#dcdcdc"></div>
<div class="a" style="left:8px;top:235px;width:1381px;height:1px;background:#b4b4b4"></div>
<div class="a" style="left:8px;top:236px;width:1381px;height:1px;background:#000"></div>
<div class="a" style="left:0px;top:236px;width:8px;height:1px;background:#dcdcdc"></div>
<div class="a" style="left:8px;top:259px;width:1381px;height:1px;background:#b4b4b4"></div>
<div class="a" style="left:8px;top:260px;width:1381px;height:1px;background:#000"></div>
<div class="a" style="left:0px;top:260px;width:8px;height:1px;background:#dcdcdc"></div>
<div class="a" style="left:8px;top:282px;width:1381px;height:1px;background:#b4b4b4"></div>
<div class="a" style="left:8px;top:283px;width:1381px;height:1px;background:#000"></div>
<div class="a" style="left:0px;top:283px;width:8px;height:1px;background:#dcdcdc"></div>
<div class="a" style="left:8px;top:306px;width:1381px;height:1px;background:#b4b4b4"></div>
<div class="a" style="left:8px;top:307px;width:1381px;height:1px;background:#000"></div>
<div class="a" style="left:0px;top:307px;width:8px;height:1px;background:#dcdcdc"></div>
<div class="a" style="left:8px;top:330px;width:1381px;height:1px;background:#b4b4b4"></div>
<div class="a" style="left:8px;top:331px;width:1381px;height:1px;background:#000"></div>
<div class="a" style="left:0px;top:331px;width:8px;height:1px;background:#dcdcdc"></div>
<div class="a" style="left:8px;top:353px;width:1381px;height:1px;background:#b4b4b4"></div>
<div class="a" style="left:8px;top:354px;width:1381px;height:1px;background:#000"></div>
<div class="a" style="left:0px;top:354px;width:8px;height:1px;background:#dcdcdc"></div>
<div class="a" style="left:8px;top:377px;width:1381px;height:1px;background:#b4b4b4"></div>
<div class="a" style="left:8px;top:378px;width:1381px;height:1px;background:#000"></div>
<div class="a" style="left:0px;top:378px;width:8px;height:1px;background:#dcdcdc"></div>
<div class="a" style="left:8px;top:401px;width:1381px;height:1px;background:#b4b4b4"></div>
<div class="a" style="left:8px;top:402px;width:1381px;height:1px;background:#000"></div>
<div class="a" style="left:0px;top:402px;width:8px;height:1px;background:#dcdcdc"></div>
<div class="a" style="left:8px;top:424px;width:1381px;height:1px;background:#b4b4b4"></div>
<div class="a" style="left:8px;top:425px;width:1381px;height:1px;background:#000"></div>
<div class="a" style="left:0px;top:425px;width:8px;height:1px;background:#dcdcdc"></div>
<div class="a" style="left:8px;top:448px;width:1381px;height:1px;background:#b4b4b4"></div>
<div class="a" style="left:8px;top:449px;width:1381px;height:1px;background:#000"></div>
<div class="a" style="left:0px;top:449px;width:8px;height:1px;background:#dcdcdc"></div>
<div class="a" style="left:8px;top:472px;width:1381px;height:1px;background:#b4b4b4"></div>
<div class="a" style="left:8px;top:473px;width:1381px;height:1px;background:#000"></div>
<div class="a" style="left:0px;top:473px;width:8px;height:1px;background:#dcdcdc"></div>
<div class="a" style="left:8px;top:495px;width:1381px;height:1px;background:#b4b4b4"></div>
<div class="a" style="left:8px;top:496px;width:1381px;height:1px;background:#000"></div>
<div class="a" style="left:0px;top:496px;width:8px;height:1px;background:#dcdcdc"></div>
<div class="a" style="left:8px;top:519px;width:1381px;height:1px;background:#b4b4b4"></div>
<div class="a" style="left:8px;top:520px;width:1381px;height:1px;background:#000"></div>
<div class="a" style="left:0px;top:520px;width:8px;height:1px;background:#dcdcdc"></div>
<div class="a" style="left:8px;top:543px;width:1381px;height:1px;background:#b4b4b4"></div>
<div class="a" style="left:8px;top:544px;width:1381px;height:1px;background:#000"></div>
<div class="a" style="left:0px;top:544px;width:8px;height:1px;background:#dcdcdc"></div>
<div class="a" style="left:8px;top:567px;width:1381px;height:1px;background:#b4b4b4"></div>
<div class="a" style="left:8px;top:568px;width:1381px;height:1px;background:#000"></div>
<div class="a" style="left:0px;top:568px;width:8px;height:1px;background:#dcdcdc"></div>
<div class="a" style="left:8px;top:590px;width:1381px;height:1px;background:#b4b4b4"></div>
<div class="a" style="left:8px;top:591px;width:1381px;height:1px;background:#000"></div>
<div class="a" style="left:0px;top:591px;width:8px;height:1px;background:#dcdcdc"></div>
<div class="a" style="left:8px;top:614px;width:1381px;height:1px;background:#b4b4b4"></div>
<div class="a" style="left:8px;top:615px;width:1381px;height:1px;background:#000"></div>
<div class="a" style="left:0px;top:615px;width:8px;height:1px;background:#dcdcdc"></div>
<div class="a" style="left:8px;top:638px;width:1381px;height:1px;background:#b4b4b4"></div>
<div class="a" style="left:8px;top:639px;width:1381px;height:1px;background:#000"></div>
<div class="a" style="left:0px;top:639px;width:8px;height:1px;background:#dcdcdc"></div>
<div class="a" style="left:8px;top:661px;width:1381px;height:1px;background:#b4b4b4"></div>
<div class="a" style="left:8px;top:662px;width:1381px;height:1px;background:#000"></div>
<div class="a" style="left:0px;top:662px;width:8px;height:1px;background:#dcdcdc"></div>
<div class="a" style="left:69px;top:0px;width:1px;height:648px;background:#000"></div>
<div class="a" style="left:167px;top:0px;width:1px;height:648px;background:#000"></div>
<div class="a" style="left:468px;top:0px;width:1px;height:648px;background:#000"></div>
<div class="a" style="left:558px;top:0px;width:1px;height:648px;background:#000"></div>
<div class="a" style="left:628px;top:0px;width:1px;height:648px;background:#000"></div>
<div class="a" style="left:697px;top:0px;width:1px;height:648px;background:#000"></div>
<div class="a" style="left:767px;top:0px;width:1px;height:648px;background:#000"></div>
<div class="a" style="left:836px;top:0px;width:1px;height:648px;background:#000"></div>
<div class="a" style="left:906px;top:0px;width:1px;height:648px;background:#000"></div>
<div class="a" style="left:976px;top:0px;width:1px;height:648px;background:#000"></div>
<div class="a" style="left:1045px;top:0px;width:1px;height:648px;background:#000"></div>
<div class="a" style="left:1113px;top:0px;width:1px;height:648px;background:#000"></div>
<div class="a" style="left:1182px;top:0px;width:1px;height:648px;background:#000"></div>
<div class="a" style="left:1250px;top:0px;width:1px;height:648px;background:#000"></div>
<div class="a" style="left:1319px;top:0px;width:1px;height:648px;background:#000"></div>
<div class="a" style="left:1389px;top:0px;width:1px;height:648px;background:#000"></div>
</div>
<div class="a" style="left:1560px;top:211px;width:22px;height:718px;background:#f0f0f0"></div>
<div class="a" style="left:1562px;top:299px;width:19px;height:587px;background:#cdcdcd"></div>
<svg class="a" style="left:1565px;top:287px" width="12" height="8"><path d="M1 6.5L6 1.5L11 6.5" fill="none" stroke="#a3a3a3" stroke-width="1.2"/></svg>
<svg class="a" style="left:1565px;top:914px" width="12" height="8"><path d="M1 1.5L6 6.5L11 1.5" fill="none" stroke="#a3a3a3" stroke-width="1.2"/></svg>
<div class="a" style="left:171px;top:929px;width:1411px;height:22px;background:#f0f0f0"></div>
<div class="a" style="left:199px;top:929px;width:755px;height:21px;background:#cdcdcd"></div>
<svg class="a" style="left:185px;top:934px" width="8" height="12"><path d="M6.5 1L1.5 6L6.5 11" fill="none" stroke="#a3a3a3" stroke-width="1.2"/></svg>
<svg class="a" style="left:1547px;top:934px" width="8" height="12"><path d="M1.5 1L6.5 6L1.5 11" fill="none" stroke="#a3a3a3" stroke-width="1.2"/></svg>
<div class="a" style="left:985px;top:353px;width:307px;height:51px;background:#f1f2f7;border:1px solid #a0a0a0;box-sizing:border-box;box-shadow:1px 1px 2px rgba(0,0,0,0.15)"></div>
<div class="t " style="left:993px;top:359.24px;font-size:14.6px;line-height:18px;color:#575757;letter-spacing:0.032px;">Коэффициент корреляции: 0.710</div>
<div class="t " style="left:993px;top:379.74px;font-size:14.6px;line-height:18px;color:#575757;letter-spacing:0.068px;">Совместный период наблюдений (лет): 73</div>
<div class="a" style="left:836px;top:966px;width:81px;height:30px;background:linear-gradient(#e5e5f7,#f3f3f2 60%,#fdfde9);border:1px solid #707070;box-sizing:border-box"></div>
<div class="t " style="left:848px;top:972.94px;font-size:14.6px;line-height:18px;color:#000;letter-spacing:0.042px;">Закрыть</div>
<div class="a" style="left:0px;top:1030px;width:1920px;height:50px;background:#03040a"></div>
<div class="a" style="left:374px;top:1030px;width:60px;height:50px;background:#2a2b2f"></div>
<div class="a" style="left:69px;top:1077px;width:51px;height:3px;background:#76b9ed"></div>
<div class="a" style="left:131px;top:1077px;width:51px;height:3px;background:#76b9ed"></div>
<div class="a" style="left:317px;top:1077px;width:40px;height:3px;background:#76b9ed"></div>
<div class="a" style="left:357px;top:1077px;width:8px;height:3px;background:#5f8fb5"></div>
<div class="a" style="left:374px;top:1077px;width:60px;height:3px;background:#76b9ed"></div>
<svg class="a" style="left:20px;top:1044px" width="21" height="21"><path d="M0 3L8.5 1.8V9.8H0ZM9.5 1.6L20 0V9.8H9.5ZM0 10.8H8.5V18.8L0 17.6ZM9.5 10.8H20V20.5L9.5 19Z" fill="#fff"/></svg>
<svg class="a" style="left:80px;top:1041px" width="28" height="28"><rect x="0" y="0" width="28" height="28" rx="1.5" fill="#2346c8"/><rect x="8" y="0.5" width="13" height="8.5" fill="#d6d6d6"/><rect x="10" y="1" width="4" height="7" fill="#f4f4f4"/><rect x="16" y="1.5" width="3" height="6" fill="#2346c8"/><rect x="3" y="12" width="22" height="16" fill="#fdfdfd"/><path d="M5 14.5H23M5 17.5H23M5 20.5H23M5 23.5H18" stroke="#f2a9b0" stroke-width="1.3"/><rect x="3" y="26" width="22" height="2" fill="#e8a0a8"/></svg>
<svg class="a" style="left:141px;top:1040px" width="30" height="30"><path d="M15 15L2.0 7.5A15 15 0 0 1 28 7.5Z" fill="#e34234"/><path d="M15 15L28 7.5A15 15 0 0 1 15 30Z" fill="#fbc02d"/><path d="M15 15L15 30A15 15 0 0 1 2.0 7.5Z" fill="#2e9e48"/><circle cx="15" cy="15" r="7.2" fill="#fff"/><circle cx="15" cy="15" r="5.6" fill="#3b82f0"/></svg>
<svg class="a" style="left:203px;top:1043px" width="30" height="26"><ellipse cx="14" cy="15" rx="12" ry="7" fill="none" stroke="#f5b21b" stroke-width="3"/><circle cx="14" cy="15" r="4.5" fill="#d22"/><circle cx="3" cy="6" r="2" fill="#f5b21b"/><circle cx="10" cy="3" r="2" fill="#f5b21b"/><circle cx="18" cy="3" r="2" fill="#f5b21b"/><circle cx="26" cy="6" r="2" fill="#f5b21b"/></svg>
<svg class="a" style="left:269px;top:1041px" width="22" height="28"><rect x="0.5" y="0.5" width="21" height="27" rx="2" fill="#9fc6e6" stroke="#c9d6e2"/><rect x="3" y="3" width="16" height="7" fill="#e3f0fa"/><g fill="#eaf2fa"><rect x="3" y="13" width="3" height="2.5"/><rect x="7.5" y="13" width="3" height="2.5"/><rect x="12" y="13" width="3" height="2.5"/><rect x="3" y="17.5" width="3" height="2.5"/><rect x="7.5" y="17.5" width="3" height="2.5"/><rect x="12" y="17.5" width="3" height="2.5"/><rect x="3" y="22" width="3" height="2.5"/><rect x="7.5" y="22" width="3" height="2.5"/><rect x="12" y="22" width="3" height="2.5"/></g><rect x="16.5" y="17.5" width="2.5" height="7" fill="#f0a030"/></svg>
<svg class="a" style="left:327px;top:1041px" width="30" height="28"><rect x="7" y="0" width="22" height="28" rx="1.5" fill="#2b7cd3"/><rect x="7" y="7" width="22" height="7" fill="#185abd"/><rect x="7" y="14" width="22" height="7" fill="#1b4fa3"/><rect x="7" y="21" width="22" height="7" fill="#103f91"/><rect x="0" y="6" width="16" height="16" rx="1.5" fill="#185abd"/><text x="8" y="18.5" font-family="Liberation Sans" font-weight="bold" font-size="12" fill="#fff" text-anchor="middle">W</text></svg>
<svg class="a" style="left:390px;top:1043px" width="28" height="24"><rect x="0" y="0" width="27" height="22" fill="#e6e6e6"/><rect x="8" y="3" width="11" height="17" fill="#1e88e5"/><g stroke="#9a9a9a"><path d="M2 6H6M2 9H6M2 12H6M21 6H25M21 9H25M21 12H25M21 15H25"/></g></svg>
<svg class="a" style="left:1577px;top:1044px" width="22" height="22"><path d="M2 8L14 4L16 8L4 12Z" fill="#bbb"/><path d="M2 12L16 8" stroke="#666" stroke-width="2"/><circle cx="15" cy="15" r="5" fill="#e33"/><path d="M13 13L17 17M17 13L13 17" stroke="#fff" stroke-width="1.5"/></svg>
<svg class="a" style="left:1610px;top:1045px" width="16" height="22"><rect x="0" y="0" width="15" height="20" rx="7.5" fill="#1e88e5"/><path d="M4 6.5L11 13L7.5 16.5V3.5L11 7L4 13.5" fill="none" stroke="#fff" stroke-width="1.2"/></svg>
<svg class="a" style="left:1637px;top:1048px" width="22" height="16"><path d="M2.5 1V4M5.5 1V4M1.5 4H6.5V6.5Q4 8.5 4 10V14" fill="none" stroke="#fff" stroke-width="1.1"/><rect x="5" y="4.5" width="14" height="9" fill="none" stroke="#fff" stroke-width="1.4"/><rect x="19" y="7" width="1.6" height="4" fill="#fff"/><rect x="6.5" y="6" width="11" height="6" fill="#fff"/></svg>
<svg class="a" style="left:1668px;top:1044px" width="20" height="22"><path d="M4 1V7M1.2 2.5L6.8 5.5M6.8 2.5L1.2 5.5" stroke="#fff" stroke-width="1.1"/><path d="M3 20A15 15 0 0 1 18 5.5M6.5 20A11.5 11.5 0 0 1 18 9M10 20A8 8 0 0 1 18 12.5M13.5 20A4.5 4.5 0 0 1 18 16" fill="none" stroke="#8a8a8a" stroke-width="1.1"/><circle cx="17.5" cy="19.5" r="1.3" fill="#999"/></svg>
<svg class="a" style="left:1697px;top:1046px" width="22" height="18"><path d="M1 6H4L9 1.5V16.5L4 12H1Z" fill="none" stroke="#fff" stroke-width="1.2"/><path d="M12 6L18 12M18 6L12 12" stroke="#fff" stroke-width="1.2"/></svg>
<div class="t " style="left:1732px;top:1046.48px;font-size:14.5px;line-height:18px;color:#fff;">РУС</div>
<div class="t " style="left:1794px;top:1034.98px;font-size:14.5px;line-height:18px;color:#fff;">12:20</div>
<div class="t " style="left:1776px;top:1057.48px;font-size:14.5px;line-height:18px;color:#fff;">26.11.2025</div>
<svg class="a" style="left:1868px;top:1045px" width="23" height="20"><path d="M1 1H21V16H13.5L11 18.5L8.5 16H1Z" fill="none" stroke="#fff" stroke-width="1.3"/></svg>
<div class="a" style="left:1913px;top:1030px;width:1px;height:50px;background:#444"></div>
</body></html>
